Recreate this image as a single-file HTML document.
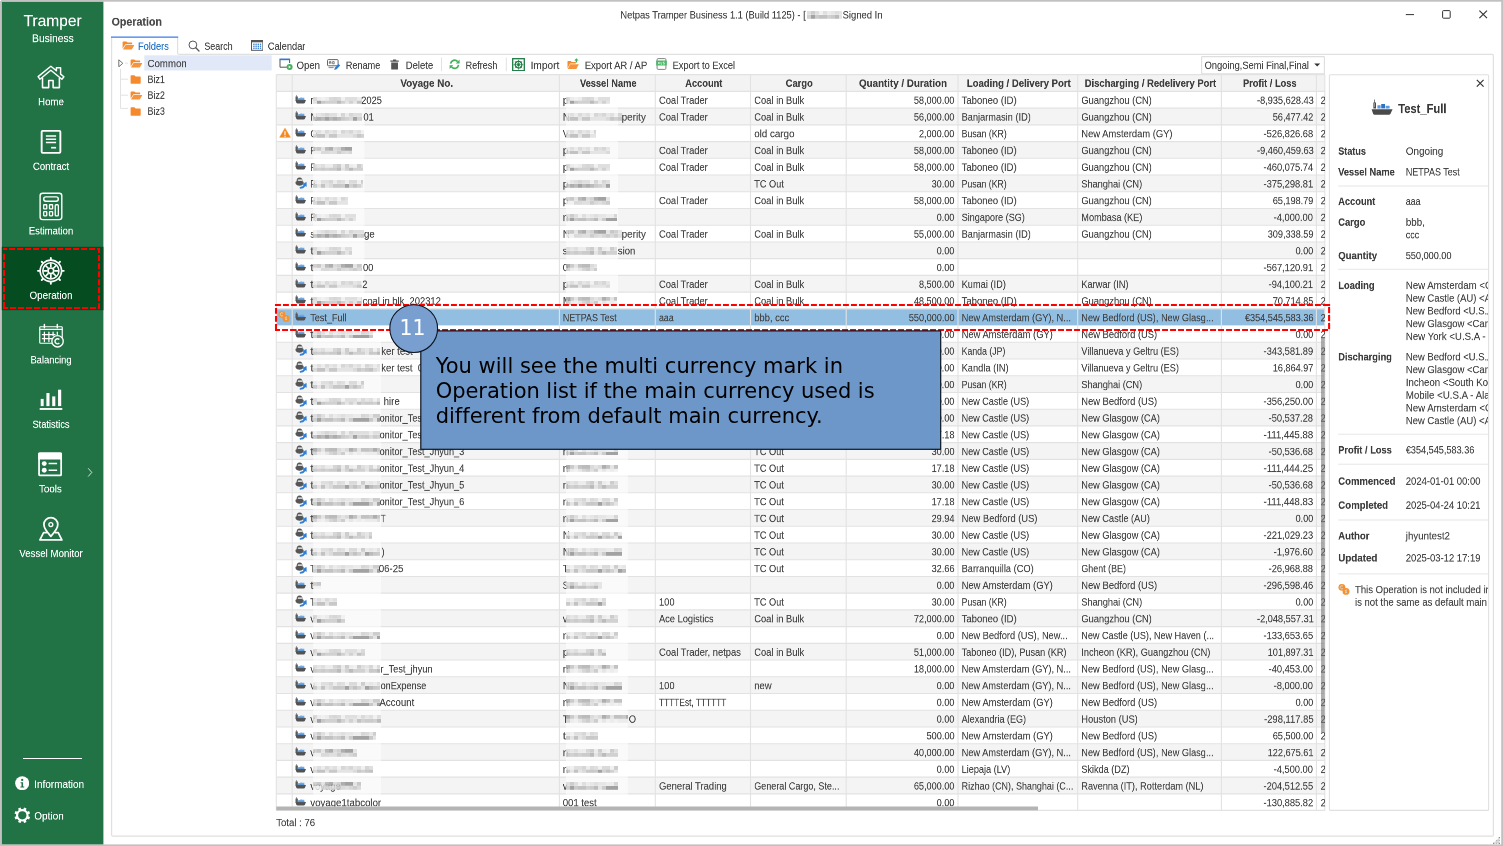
<!DOCTYPE html>
<html lang="en"><head><meta charset="utf-8"><title>Netpas Tramper Business 1.1 - Operation</title>
<style>
html,body{margin:0;padding:0;background:#fff}
body{width:1503px;height:846px;overflow:hidden;font-family:"Liberation Sans",sans-serif}
#app{will-change:transform;position:relative;width:1503px;height:846px;overflow:hidden;background:#fff;font-size:20px;color:#444}
.t{position:absolute;white-space:pre;line-height:24px;transform-origin:0 0;will-change:transform;-webkit-text-stroke:.25px}
.r{transform-origin:100% 0}
.c{transform-origin:50% 0}
.w{color:#fff}
.b{font-weight:bold;color:#3c3c3c}
.bl{color:#1f6fc4}
.dv{font-family:"DejaVu Sans","Liberation Sans",sans-serif}
#bg{position:absolute;left:0;top:0}
.p{position:absolute;white-space:pre}
.bx{position:absolute;height:7.6px;filter:blur(.45px);opacity:.9}
.m0{background:linear-gradient(90deg,#f0f0f0 0px 4px,#e4e4e4 4px 8px,#dcdcdc 8px 12px,#d2d2d2 12px 16px,#dcdcdc 16px 20px,#dcdcdc 20px 24px,#f0f0f0 24px 28px,#d2d2d2 28px 32px,#eaeaea 32px 36px,#d2d2d2 36px 40px,#dcdcdc 40px 44px,#dcdcdc 44px 48px,#dcdcdc 48px 52px,#dcdcdc 52px 56px,#eaeaea 56px 60px,#dcdcdc 60px 64px,#dcdcdc 64px 68px,#d2d2d2 68px 72px) 0 0/100% 3.8px no-repeat,linear-gradient(90deg,#c2c2c2 0px 4px,#a6a6a6 4px 8px,#b4b4b4 8px 12px,#989898 12px 16px,#b4b4b4 16px 20px,#a6a6a6 20px 24px,#b4b4b4 24px 28px,#c6c6c6 28px 32px,#cccccc 32px 36px,#d6d6d6 36px 40px,#989898 40px 44px,#cccccc 44px 48px,#c6c6c6 48px 52px,#c2c2c2 52px 56px,#d6d6d6 56px 60px,#c6c6c6 60px 64px,#cccccc 64px 68px,#c2c2c2 68px 72px) 0 3.8px/100% 3.8px no-repeat}
.m1{background:linear-gradient(90deg,#eaeaea 0px 4px,#f0f0f0 4px 8px,#dcdcdc 8px 12px,#dcdcdc 12px 16px,#d2d2d2 16px 20px,#eaeaea 20px 24px,#d6d6d6 24px 28px,#dcdcdc 28px 32px,#f0f0f0 32px 36px,#d6d6d6 36px 40px,#d6d6d6 40px 44px,#f0f0f0 44px 48px,#c8c8c8 48px 52px,#eaeaea 52px 56px,#e4e4e4 56px 60px,#eaeaea 60px 64px,#dcdcdc 64px 68px,#c8c8c8 68px 72px) 0 0/100% 3.8px no-repeat,linear-gradient(90deg,#c6c6c6 0px 4px,#e2e2e2 4px 8px,#bcbcbc 8px 12px,#e2e2e2 12px 16px,#d6d6d6 16px 20px,#c2c2c2 20px 24px,#c2c2c2 24px 28px,#c6c6c6 28px 32px,#989898 32px 36px,#cccccc 36px 40px,#bcbcbc 40px 44px,#cccccc 44px 48px,#e2e2e2 48px 52px,#989898 52px 56px,#b4b4b4 56px 60px,#c2c2c2 60px 64px,#c6c6c6 64px 68px,#bcbcbc 68px 72px) 0 3.8px/100% 3.8px no-repeat}
.m2{background:linear-gradient(90deg,#cccccc 0px 4px,#c2c2c2 4px 8px,#e2e2e2 8px 12px,#b4b4b4 12px 16px,#a6a6a6 16px 20px,#d6d6d6 20px 24px,#cccccc 24px 28px,#a6a6a6 28px 32px,#989898 32px 36px,#989898 36px 40px,#e2e2e2 40px 44px,#c2c2c2 44px 48px,#cccccc 48px 52px,#e2e2e2 52px 56px,#989898 56px 60px,#c6c6c6 60px 64px,#d6d6d6 64px 68px,#cccccc 68px 72px) 0 0/100% 3.8px no-repeat,linear-gradient(90deg,#f0f0f0 0px 4px,#f0f0f0 4px 8px,#d6d6d6 8px 12px,#d6d6d6 12px 16px,#dcdcdc 16px 20px,#dcdcdc 20px 24px,#c8c8c8 24px 28px,#d6d6d6 28px 32px,#dcdcdc 32px 36px,#d2d2d2 36px 40px,#c8c8c8 40px 44px,#d6d6d6 44px 48px,#c8c8c8 48px 52px,#dcdcdc 52px 56px,#f0f0f0 56px 60px,#d2d2d2 60px 64px,#d6d6d6 64px 68px,#f0f0f0 68px 72px) 0 3.8px/100% 3.8px no-repeat}
.m3{background:linear-gradient(90deg,#dcdcdc 0px 4px,#c8c8c8 4px 8px,#dcdcdc 8px 12px,#f0f0f0 12px 16px,#dcdcdc 16px 20px,#eaeaea 20px 24px,#e4e4e4 24px 28px,#dcdcdc 28px 32px,#e4e4e4 32px 36px,#e4e4e4 36px 40px,#eaeaea 40px 44px,#eaeaea 44px 48px,#d2d2d2 48px 52px,#d6d6d6 52px 56px,#e4e4e4 56px 60px,#c8c8c8 60px 64px,#c8c8c8 64px 68px,#d2d2d2 68px 72px) 0 0/100% 3.8px no-repeat,linear-gradient(90deg,#cccccc 0px 4px,#989898 4px 8px,#c6c6c6 8px 12px,#bcbcbc 12px 16px,#bcbcbc 16px 20px,#cccccc 20px 24px,#c6c6c6 24px 28px,#b4b4b4 28px 32px,#e2e2e2 32px 36px,#c6c6c6 36px 40px,#989898 40px 44px,#989898 44px 48px,#989898 48px 52px,#989898 52px 56px,#c2c2c2 56px 60px,#e2e2e2 60px 64px,#989898 64px 68px,#b4b4b4 68px 72px) 0 3.8px/100% 3.8px no-repeat}
.m4{background:linear-gradient(90deg,#eaeaea 0px 4px,#dcdcdc 4px 8px,#eaeaea 8px 12px,#d6d6d6 12px 16px,#e4e4e4 16px 20px,#dcdcdc 20px 24px,#f0f0f0 24px 28px,#d2d2d2 28px 32px,#dcdcdc 32px 36px,#d2d2d2 36px 40px,#e4e4e4 40px 44px,#dcdcdc 44px 48px,#f0f0f0 48px 52px,#d2d2d2 52px 56px,#dcdcdc 56px 60px,#eaeaea 60px 64px,#dcdcdc 64px 68px,#e4e4e4 68px 72px) 0 0/100% 3.8px no-repeat,linear-gradient(90deg,#d6d6d6 0px 4px,#bcbcbc 4px 8px,#bcbcbc 8px 12px,#e2e2e2 12px 16px,#c2c2c2 16px 20px,#c2c2c2 20px 24px,#e2e2e2 24px 28px,#e2e2e2 28px 32px,#e2e2e2 32px 36px,#e2e2e2 36px 40px,#d6d6d6 40px 44px,#c2c2c2 44px 48px,#cccccc 48px 52px,#c2c2c2 52px 56px,#bcbcbc 56px 60px,#d6d6d6 60px 64px,#e2e2e2 64px 68px,#cccccc 68px 72px) 0 3.8px/100% 3.8px no-repeat}
.m5{background:linear-gradient(90deg,#a6a6a6 0px 4px,#c6c6c6 4px 8px,#e2e2e2 8px 12px,#bcbcbc 12px 16px,#b4b4b4 16px 20px,#b4b4b4 20px 24px,#d6d6d6 24px 28px,#e2e2e2 28px 32px,#d6d6d6 32px 36px,#a6a6a6 36px 40px,#bcbcbc 40px 44px,#e2e2e2 44px 48px,#bcbcbc 48px 52px,#bcbcbc 52px 56px,#c2c2c2 56px 60px,#a6a6a6 60px 64px,#c2c2c2 64px 68px,#a6a6a6 68px 72px) 0 0/100% 3.8px no-repeat,linear-gradient(90deg,#d2d2d2 0px 4px,#eaeaea 4px 8px,#f0f0f0 8px 12px,#e4e4e4 12px 16px,#d2d2d2 16px 20px,#c8c8c8 20px 24px,#dcdcdc 24px 28px,#c8c8c8 28px 32px,#f0f0f0 32px 36px,#e4e4e4 36px 40px,#f0f0f0 40px 44px,#eaeaea 44px 48px,#f0f0f0 48px 52px,#eaeaea 52px 56px,#eaeaea 56px 60px,#eaeaea 60px 64px,#dcdcdc 64px 68px,#eaeaea 68px 72px) 0 3.8px/100% 3.8px no-repeat}
.m6{background:linear-gradient(90deg,#d6d6d6 0px 4px,#eaeaea 4px 8px,#f0f0f0 8px 12px,#eaeaea 12px 16px,#d6d6d6 16px 20px,#d2d2d2 20px 24px,#d6d6d6 24px 28px,#f0f0f0 28px 32px,#dcdcdc 32px 36px,#dcdcdc 36px 40px,#dcdcdc 40px 44px,#eaeaea 44px 48px,#d6d6d6 48px 52px,#e4e4e4 52px 56px,#dcdcdc 56px 60px,#f0f0f0 60px 64px,#dcdcdc 64px 68px,#dcdcdc 68px 72px) 0 0/100% 3.8px no-repeat,linear-gradient(90deg,#e2e2e2 0px 4px,#989898 4px 8px,#c2c2c2 8px 12px,#cccccc 12px 16px,#cccccc 16px 20px,#cccccc 20px 24px,#b4b4b4 24px 28px,#cccccc 28px 32px,#e2e2e2 32px 36px,#cccccc 36px 40px,#e2e2e2 40px 44px,#bcbcbc 44px 48px,#cccccc 48px 52px,#c6c6c6 52px 56px,#c6c6c6 56px 60px,#cccccc 60px 64px,#b4b4b4 64px 68px,#b4b4b4 68px 72px) 0 3.8px/100% 3.8px no-repeat}
.m7{background:linear-gradient(90deg,#dcdcdc 0px 4px,#e4e4e4 4px 8px,#dcdcdc 8px 12px,#eaeaea 12px 16px,#eaeaea 16px 20px,#d2d2d2 20px 24px,#c8c8c8 24px 28px,#eaeaea 28px 32px,#c8c8c8 32px 36px,#eaeaea 36px 40px,#f0f0f0 40px 44px,#c8c8c8 44px 48px,#dcdcdc 48px 52px,#e4e4e4 52px 56px,#d2d2d2 56px 60px,#f0f0f0 60px 64px,#d6d6d6 64px 68px,#dcdcdc 68px 72px) 0 0/100% 3.8px no-repeat,linear-gradient(90deg,#c6c6c6 0px 4px,#cccccc 4px 8px,#c6c6c6 8px 12px,#cccccc 12px 16px,#c6c6c6 16px 20px,#c6c6c6 20px 24px,#b4b4b4 24px 28px,#e2e2e2 28px 32px,#cccccc 32px 36px,#b4b4b4 36px 40px,#cccccc 40px 44px,#cccccc 44px 48px,#cccccc 48px 52px,#e2e2e2 52px 56px,#c2c2c2 56px 60px,#c6c6c6 60px 64px,#b4b4b4 64px 68px,#bcbcbc 68px 72px) 0 3.8px/100% 3.8px no-repeat}

</style></head>
<body>
<div id="app">
<svg id="bg" width="1503" height="846" viewBox="0 0 1503 846"><rect x="0.00" y="0.00" width="1503.00" height="846.00" fill="#c2c0c0"/><rect x="1.70" y="1.70" width="1499.50" height="842.70" fill="#fff"/><rect x="0.00" y="0.00" width="1.00" height="1.00" fill="#fff"/><rect x="1.80" y="1.80" width="101.60" height="842.60" fill="#217346"/><rect x="1.80" y="246.80" width="101.60" height="63.40" fill="#054d21"/><rect x="23.00" y="758.00" width="59.00" height="1.00" fill="#fff"/><rect x="111.60" y="54.30" width="1381.80" height="781.80" fill="none" stroke="#e0e0e0" stroke-width="1.2" rx="1.2"/><rect x="111.00" y="37.40" width="67.20" height="17.60" fill="#fff"/><path d="M111.6 55 V37.4 M177.6 37.4 V54.3" fill="none" stroke="#e0e0e0" stroke-width="1.2"/><path d="M111.0 37.1 H178.2" fill="none" stroke="#3a7bea" stroke-width="1.2"/><rect x="144.30" y="55.30" width="127.40" height="15.20" fill="#e1e9f8"/><rect x="441.00" y="57.60" width="1.00" height="13.60" fill="#e2e2e2"/><rect x="505.80" y="57.60" width="1.00" height="13.60" fill="#e2e2e2"/><rect x="1201.60" y="56.60" width="122.80" height="17.20" fill="#fff" stroke="#dedede" stroke-width="1.1" rx="0.8"/><rect x="276.30" y="74.60" width="1048.50" height="16.80" fill="#f3f3f3"/><rect x="276.30" y="108.12" width="1048.50" height="16.73" fill="#f4f4f4"/><rect x="276.30" y="141.58" width="1048.50" height="16.72" fill="#f4f4f4"/><rect x="276.30" y="175.03" width="1048.50" height="16.72" fill="#f4f4f4"/><rect x="276.30" y="208.48" width="1048.50" height="16.72" fill="#f4f4f4"/><rect x="276.30" y="241.93" width="1048.50" height="16.72" fill="#f4f4f4"/><rect x="276.30" y="275.38" width="1048.50" height="16.73" fill="#f4f4f4"/><rect x="276.30" y="308.83" width="1048.50" height="16.73" fill="#92bee1"/><rect x="276.30" y="342.28" width="1048.50" height="16.72" fill="#f4f4f4"/><rect x="276.30" y="375.73" width="1048.50" height="16.73" fill="#f4f4f4"/><rect x="276.30" y="409.18" width="1048.50" height="16.72" fill="#f4f4f4"/><rect x="276.30" y="442.62" width="1048.50" height="16.73" fill="#f4f4f4"/><rect x="276.30" y="476.08" width="1048.50" height="16.73" fill="#f4f4f4"/><rect x="276.30" y="509.53" width="1048.50" height="16.72" fill="#f4f4f4"/><rect x="276.30" y="542.98" width="1048.50" height="16.73" fill="#f4f4f4"/><rect x="276.30" y="576.43" width="1048.50" height="16.73" fill="#f4f4f4"/><rect x="276.30" y="609.88" width="1048.50" height="16.73" fill="#f4f4f4"/><rect x="276.30" y="643.33" width="1048.50" height="16.73" fill="#f4f4f4"/><rect x="276.30" y="676.77" width="1048.50" height="16.73" fill="#f4f4f4"/><rect x="276.30" y="710.23" width="1048.50" height="16.73" fill="#f4f4f4"/><rect x="276.30" y="743.68" width="1048.50" height="16.72" fill="#f4f4f4"/><rect x="276.30" y="777.12" width="1048.50" height="16.73" fill="#f4f4f4"/><path d="M276.3 74.6H1324.8M276.3 810.4H1324.8M1324.8 74.6V810.4M276.3 91.40H1324.8M276.3 108.12H1324.8M276.3 124.85H1324.8M276.3 141.58H1324.8M276.3 158.30H1324.8M276.3 175.03H1324.8M276.3 191.75H1324.8M276.3 208.48H1324.8M276.3 225.20H1324.8M276.3 241.93H1324.8M276.3 258.65H1324.8M276.3 275.38H1324.8M276.3 292.10H1324.8M276.3 308.83H1324.8M276.3 325.55H1324.8M276.3 342.28H1324.8M276.3 359.00H1324.8M276.3 375.73H1324.8M276.3 392.45H1324.8M276.3 409.18H1324.8M276.3 425.90H1324.8M276.3 442.62H1324.8M276.3 459.35H1324.8M276.3 476.08H1324.8M276.3 492.80H1324.8M276.3 509.53H1324.8M276.3 526.25H1324.8M276.3 542.98H1324.8M276.3 559.70H1324.8M276.3 576.43H1324.8M276.3 593.15H1324.8M276.3 609.88H1324.8M276.3 626.60H1324.8M276.3 643.33H1324.8M276.3 660.05H1324.8M276.3 676.77H1324.8M276.3 693.50H1324.8M276.3 710.23H1324.8M276.3 726.95H1324.8M276.3 743.68H1324.8M276.3 760.40H1324.8M276.3 777.12H1324.8M276.3 793.85H1324.8" fill="none" stroke="#e2e2e2" stroke-width="1.1"/><path d="M276.3 74.6V810.4M292.2 74.6V810.4M559.4 74.6V810.4M655.3 74.6V810.4M750.5 74.6V810.4M846.2 74.6V810.4M958.0 74.6V810.4M1077.7 74.6V810.4M1221.4 74.6V810.4M1316.4 74.6V810.4" fill="none" stroke="#e2e2e2" stroke-width="1.1"/><rect x="313.20" y="92.40" width="51.20" height="216.20" fill="#fff" fill-opacity=".55"/><rect x="313.20" y="326.40" width="67.80" height="468.60" fill="#fff" fill-opacity=".55"/><rect x="566.00" y="92.40" width="52.00" height="216.20" fill="#fff" fill-opacity=".55"/><rect x="566.00" y="443.40" width="61.80" height="351.60" fill="#fff" fill-opacity=".55"/><rect x="1329.40" y="74.80" width="159.20" height="735.60" fill="#fff" stroke="#e0e0e0" stroke-width="1.1" rx="1"/><rect x="1338.20" y="185.50" width="150.40" height="1.00" fill="#e6e6e6"/><rect x="1338.20" y="268.80" width="150.40" height="1.00" fill="#e6e6e6"/><rect x="1338.20" y="433.70" width="150.40" height="1.00" fill="#e6e6e6"/><rect x="1338.20" y="463.70" width="150.40" height="1.00" fill="#e6e6e6"/><rect x="1338.20" y="519.50" width="150.40" height="1.00" fill="#e6e6e6"/><rect x="1338.20" y="573.40" width="150.40" height="1.00" fill="#e6e6e6"/></svg>
<span class="t c w" style="top:10px;left:52px;transform:translate(calc(-50% + 0.60px),0.97px) scale(0.4853,0.5045);font-size:32px;line-height:38px;">Tramper</span>
<span class="t c w" style="top:31px;left:52px;transform:translate(calc(-50% + 0.90px),0.83px) scale(0.4675,0.5133);font-size:22px;line-height:26px;">Business</span>
<svg style="position:absolute;left:0.00px;top:0.00px;" width="104.00" height="846.00" viewBox="0 0 104 846"><g fill="none" stroke="#fff" stroke-linejoin="round" stroke-linecap="round"><path d="M38.1 76.6 L50.85 66.2 L56.4 70.7 V67.7 H60.6 V74.1 L63.9 76.7 L61.9 79.2 L50.85 70.3 L39.9 79.2 Z" stroke-width="1.45"/><path d="M42.5 78.3 V87.6 H48.7 V80.5 H53.1 V87.6 H59.4 V78.3" stroke-width="1.55"/><rect x="41.65" y="130.85" width="18.7" height="22" rx="1" stroke-width="1.9"/><path d="M45.9 135.9 H56.1 M45.9 139.25 H56.1 M45.9 142.5 H56.1" stroke-width="1.45" stroke-linecap="butt"/><path d="M51.1 147.7 H56.1" stroke-width="1.7" stroke-linecap="butt"/><rect x="40.1" y="193.2" width="21.7" height="26.4" rx="2.6" stroke-width="1.4"/><rect x="43.7" y="196.9" width="14.6" height="4.3" rx="2.15" stroke-width="1.4"/><g stroke-width="1.3"><rect x="43.65" y="204.75" width="3.1" height="4.2" rx=".5"/><rect x="49.5" y="204.75" width="3.1" height="4.2" rx=".5"/><rect x="43.65" y="211.7" width="3.1" height="4.1" rx=".5"/><rect x="49.5" y="211.7" width="3.1" height="4.1" rx=".5"/><rect x="55.25" y="204.75" width="3.1" height="11.05" rx=".9"/></g><circle cx="50.85" cy="270.85" r="10.75" stroke-width="1.55"/><circle cx="50.85" cy="270.85" r="8.1" stroke-width="1.5"/><circle cx="50.85" cy="270.85" r="2.85" stroke-width="1.7"/><path d="M54.35 270.85L58.45 270.85M53.32 273.32L56.22 276.22M50.85 274.35L50.85 278.45M48.38 273.32L45.48 276.22M47.35 270.85L43.25 270.85M48.38 268.38L45.48 265.48M50.85 267.35L50.85 263.25M53.32 268.38L56.22 265.48" stroke-width="1.65" stroke-linecap="butt"/><path d="M62.15 270.85L63.75 270.85M58.84 278.84L59.97 279.97M50.85 282.15L50.85 283.75M42.86 278.84L41.73 279.97M39.55 270.85L37.95 270.85M42.86 262.86L41.73 261.73M50.85 259.55L50.85 257.95M58.84 262.86L59.97 261.73" stroke-width="1.9"/><rect x="39.75" y="326.75" width="22.5" height="16.5" rx=".8" stroke-width="1.15"/><path d="M39.8 329.4 H62.2" stroke-width="1.15"/><path d="M44.4 324.4 V327.8 M57.3 324.4 V327.8" stroke-width="1.5"/><path d="M42.4 334.6 H55 M42.4 338.6 H51.5 M44.4 332.2 V341.6 M48.9 332.2 V341.6 M53.1 332.2 V335.5 M57.3 332.2 V334.4" stroke-width="1.25"/><circle cx="57.55" cy="341.3" r="5.7" fill="#217346" stroke-width="1.35"/><path d="M59.35 339.5 A2.55 2.55 0 1 0 59.35 343.1" stroke-width="1.45" stroke-linecap="butt"/><path d="M50.85 536.3 C46.4 531.6 43.9 528.3 43.9 524.6 A6.95 6.95 0 0 1 57.8 524.6 C57.8 528.3 55.3 531.6 50.85 536.3 Z" stroke-width="1.75"/><circle cx="50.85" cy="524.6" r="1.95" stroke-width="1.35"/><path d="M46.2 532.7 H43.6 L39.9 539.9 H61.9 L58.2 532.7 H55.5" stroke-width="1.7"/></g><g fill="#fff"><rect x="40.7" y="398.9" width="2.95" height="7.2"/><rect x="46.4" y="393" width="3.1" height="13.1"/><rect x="52.2" y="396.4" width="3.1" height="9.7"/><rect x="58.05" y="389.7" width="3.15" height="16.4"/><rect x="39.7" y="408.05" width="22.6" height="1.85"/></g><rect x="39.05" y="453.4" width="22.1" height="22" rx="1" fill="none" stroke="#fff" stroke-width="1.75"/><path d="M38.2 453.4 Q38.2 452.5 39.1 452.5 H61.1 Q62 452.5 62 453.4 V459.4 H38.2 Z" fill="#fff"/><circle cx="44.25" cy="463.6" r="2.45" fill="#fff"/><circle cx="44.25" cy="470.3" r="2.45" fill="#fff"/><path d="M48.6 463.6 H57.1 M48.6 470.3 H57.1" stroke="#fff" stroke-width="1.5" fill="none"/><path d="M88.2 468.3 L91.8 472.4 L88.2 476.5" fill="none" stroke="#e4eee8" stroke-width="1" stroke-opacity=".9"/></svg>
<span class="t c w" style="top:95px;left:51px;transform:translate(calc(-50% + 0.00px),0.39px) scale(0.4833,0.5214);">Home</span>
<span class="t c w" style="top:159px;left:51px;transform:translate(calc(-50% + 0.00px),0.99px) scale(0.4794,0.5214);">Contract</span>
<span class="t c w" style="top:224px;left:51px;transform:translate(calc(-50% + 0.00px),0.49px) scale(0.4754,0.5214);">Estimation</span>
<span class="t c w" style="top:288px;left:51px;transform:translate(calc(-50% + 0.00px),0.99px) scale(0.4878,0.5214);">Operation</span>
<span class="t c w" style="top:353px;left:51px;transform:translate(calc(-50% + 0.00px),0.49px) scale(0.4663,0.5214);">Balancing</span>
<span class="t c w" style="top:417px;left:51px;transform:translate(calc(-50% + 0.00px),0.99px) scale(0.4629,0.5214);">Statistics</span>
<span class="t c w" style="top:482px;left:50px;transform:translate(calc(-50% + 0.40px),0.49px) scale(0.4866,0.5214);">Tools</span>
<span class="t c w" style="top:547px;left:51px;transform:translate(calc(-50% + 0.00px),0.09px) scale(0.4838,0.5214);">Vessel Monitor</span>
<svg style="position:absolute;left:14.80px;top:776.00px;" width="14.40" height="14.40" viewBox="0 0 14.4 14.4"><circle cx="7.2" cy="7.2" r="7" fill="#fff"/><circle cx="7.2" cy="3.9" r="1.15" fill="#217346"/><path d="M5.6 6.3 H8.1 V10.6 H9.2 V11.5 H5.4 V10.6 H6.5 V7.2 H5.6 Z" fill="#217346"/></svg>
<span class="t w" style="top:777px;left:34px;transform:translate(0.20px,0.89px) scale(0.4982,0.5214);">Information</span>
<svg style="position:absolute;left:13.70px;top:806.70px;" width="16.60" height="16.60" viewBox="0 0 16.6 16.6"><path d="M14.32 9.31L16.09 10.10L15.08 12.54L13.27 11.84L11.84 13.27L12.54 15.08L10.10 16.09L9.31 14.32L7.29 14.32L6.50 16.09L4.06 15.08L4.76 13.27L3.33 11.84L1.52 12.54L0.51 10.10L2.28 9.31L2.28 7.29L0.51 6.50L1.52 4.06L3.33 4.76L4.76 3.33L4.06 1.52L6.50 0.51L7.29 2.28L9.31 2.28L10.10 0.51L12.54 1.52L11.84 3.33L13.27 4.76L15.08 4.06L16.09 6.50L14.32 7.29Z" fill="#fff"/><circle cx="8.3" cy="8.3" r="6.0" fill="#fff"/><circle cx="8.3" cy="8.3" r="4.1" fill="#217346"/></svg>
<span class="t w" style="top:809px;left:34px;transform:translate(0.20px,0.59px) scale(0.5019,0.5214);">Option</span>
<svg style="position:absolute;left:0.00px;top:0.00px;pointer-events:none" width="1503.00" height="846.00" viewBox="0 0 1503 846"><path d="M2.97 249.0H7.13M9.08 249.0H15.13M17.08 249.0H23.13M25.08 249.0H31.13M33.08 249.0H39.13M41.08 249.0H47.13M49.08 249.0H55.13M57.08 249.0H63.13M65.08 249.0H71.13M73.08 249.0H79.13M81.08 249.0H87.13M89.08 249.0H95.13M97.08 249.0H100.05M2.97 308.0H8.10M10.00 308.0H16.10M18.00 308.0H24.10M26.00 308.0H32.10M34.00 308.0H40.10M42.00 308.0H48.10M50.00 308.0H56.10M58.00 308.0H64.10M66.00 308.0H72.10M74.00 308.0H80.10M82.00 308.0H88.10M90.00 308.0H96.10M98.00 308.0H100.05M99.0 248.00V253.06M99.0 255.10V261.10M99.0 263.14V269.14M99.0 271.18V277.18M99.0 279.22V285.22M99.0 287.26V293.26M99.0 295.30V301.30M99.0 303.34V309.00M4.0 253.85V259.85M4.0 261.89V267.89M4.0 269.93V275.93M4.0 277.97V283.97M4.0 286.01V292.01M4.0 294.05V300.05M4.0 302.09V308.09" fill="none" stroke="#ff0000" stroke-width="2.05"/></svg>
<span class="t" style="top:8px;left:620px;transform:translate(0.40px,0.59px) scale(0.4647,0.5214);">Netpas Tramper Business 1.1 (Build 1125) - [</span>
<div class="bx m3" style="left:806.6px;top:11.2px;width:35px"></div>
<span class="t" style="top:8px;left:842px;transform:translate(0.60px,0.59px) scale(0.4719,0.5214);">Signed In</span>
<svg style="position:absolute;left:1404.00px;top:8.00px;" width="96.00" height="14.00" viewBox="0 0 96 14"><g fill="none" stroke="#333" stroke-width="1"><path d="M1.8 6.6 H10"/><rect x="38.6" y="2.6" width="7.6" height="7.6" rx=".8"/><path d="M75.4 2.6 L83 10.2 M83 2.6 L75.4 10.2" stroke-width="1.15"/></g></svg>
<span class="t b" style="top:15px;left:111px;transform:translate(0.60px,0.07px) scale(0.4844,0.5267);font-size:22px;line-height:26px;color:#484848">Operation</span>
<svg style="position:absolute;left:121.60px;top:40.30px;" width="12.80" height="10.40" viewBox="0 0 12.8 10.4"><path d="M.6 2.2 Q.6 1.4 1.4 1.4 H4.4 L5.6 2.6 H9.6 Q10.2 2.6 10.2 3.3 V4.3 H3.3 L.6 8.6 Z" fill="#f58a2c"/><path d="M3.6 5 H12.4 L9.8 9.6 H.9 Z" fill="#f7933a"/></svg>
<span class="t bl" style="top:39px;left:138px;transform:translate(0.00px,0.89px) scale(0.4615,0.5214);">Folders</span>
<svg style="position:absolute;left:187.60px;top:40.20px;" width="12.00" height="12.00" viewBox="0 0 12 12"><circle cx="4.9" cy="4.9" r="3.9" fill="none" stroke="#555" stroke-width="1"/><path d="M7.8 7.8 L11 11" stroke="#555" stroke-width="1.3" stroke-linecap="round"/></svg>
<span class="t" style="top:39px;left:204px;transform:translate(0.30px,0.89px) scale(0.446,0.5214);">Search</span>
<svg style="position:absolute;left:250.80px;top:40.40px;" width="12.40" height="10.80" viewBox="0 0 12.4 10.8"><rect x=".5" y=".5" width="11.4" height="9.8" fill="#fff" stroke="#555" stroke-width="1"/><rect x=".5" y=".5" width="11.4" height="1.8" fill="#555"/><g fill="#2e7bd6"><rect x="2.2" y="3.6" width="1.4" height="1.3"/><rect x="4.4" y="3.6" width="1.4" height="1.3"/><rect x="6.6" y="3.6" width="1.4" height="1.3"/><rect x="8.8" y="3.6" width="1.4" height="1.3"/><rect x="2.2" y="5.6" width="1.4" height="1.3"/><rect x="4.4" y="5.6" width="1.4" height="1.3"/><rect x="6.6" y="5.6" width="1.4" height="1.3"/><rect x="8.8" y="5.6" width="1.4" height="1.3"/><rect x="2.2" y="7.6" width="1.4" height="1.3"/><rect x="4.4" y="7.6" width="1.4" height="1.3"/><rect x="6.6" y="7.6" width="1.4" height="1.3"/><rect x="8.8" y="7.6" width="1.4" height="1.3"/></g></svg>
<span class="t" style="top:39px;left:267px;transform:translate(0.80px,0.89px) scale(0.4628,0.5214);">Calendar</span>
<svg style="position:absolute;left:118.40px;top:58.60px;" width="6.00" height="8.60" viewBox="0 0 6 8.6"><path d="M.8 .8 L4.8 4.3 L.8 7.8 Z" fill="#fff" stroke="#6a6a6a" stroke-width=".95"/></svg>
<svg style="position:absolute;left:119.00px;top:62.00px;" width="12.00" height="50.00" viewBox="0 0 12 50"><path d="M6 1.2 H9 M1.5 7 V46.4 H9 M1.5 17.2 H9 M1.5 33.2 H9" fill="none" stroke="#e2e2e2" stroke-width="1"/></svg>
<svg style="position:absolute;left:130.20px;top:58.00px;" width="12.80" height="10.40" viewBox="0 0 12.8 10.4"><path d="M.6 2.2 Q.6 1.4 1.4 1.4 H4.4 L5.6 2.6 H9.6 Q10.2 2.6 10.2 3.3 V4.3 H3.3 L.6 8.6 Z" fill="#f58a2c"/><path d="M3.6 5 H12.4 L9.8 9.6 H.9 Z" fill="#f7933a"/></svg>
<span class="t" style="top:57px;left:147px;transform:translate(0.50px,0.19px) scale(0.4837,0.5214);">Common</span>
<svg style="position:absolute;left:130.20px;top:73.80px;" width="12.80" height="10.40" viewBox="0 0 12.8 10.4"><path d="M.6 1.9 Q.6 1.2 1.3 1.2 H4.4 L5.6 2.5 H10 Q10.7 2.5 10.7 3.2 V9 Q10.7 9.7 10 9.7 H1.3 Q.6 9.7 .6 9 Z" fill="#f58a2c"/></svg>
<span class="t" style="top:72px;left:147px;transform:translate(0.50px,0.99px) scale(0.4468,0.5214);">Biz1</span>
<svg style="position:absolute;left:130.20px;top:89.60px;" width="12.80" height="10.40" viewBox="0 0 12.8 10.4"><path d="M.6 2.2 Q.6 1.4 1.4 1.4 H4.4 L5.6 2.6 H9.6 Q10.2 2.6 10.2 3.3 V4.3 H3.3 L.6 8.6 Z" fill="#f58a2c"/><path d="M3.6 5 H12.4 L9.8 9.6 H.9 Z" fill="#f7933a"/></svg>
<span class="t" style="top:88px;left:147px;transform:translate(0.50px,0.79px) scale(0.4468,0.5214);">Biz2</span>
<svg style="position:absolute;left:130.20px;top:105.60px;" width="12.80" height="10.40" viewBox="0 0 12.8 10.4"><path d="M.6 1.9 Q.6 1.2 1.3 1.2 H4.4 L5.6 2.5 H10 Q10.7 2.5 10.7 3.2 V9 Q10.7 9.7 10 9.7 H1.3 Q.6 9.7 .6 9 Z" fill="#f58a2c"/></svg>
<span class="t" style="top:104px;left:147px;transform:translate(0.50px,0.79px) scale(0.4468,0.5214);">Biz3</span>
<svg style="position:absolute;left:278.60px;top:58.40px;" width="14.00" height="12.00" viewBox="0 0 14 12"><path d="M9.6 9.2 H1 V1.4 H10.6 V5" fill="none" stroke="#555" stroke-width="1"/><path d="M.5 1.4 H11.1" stroke="#2e7bd6" stroke-width="1.6"/><circle cx="10.6" cy="9" r="3" fill="#43b05c"/><path d="M9.7 7.6 L12 9 L9.7 10.4 Z" fill="#fff"/></svg>
<span class="t" style="top:58px;left:296px;transform:translate(0.60px,0.99px) scale(0.4779,0.5214);">Open</span>
<svg style="position:absolute;left:327.20px;top:58.60px;" width="13.60" height="11.60" viewBox="0 0 13.6 11.6"><rect x=".5" y=".6" width="10.6" height="6.2" rx=".8" fill="#fff" stroke="#555" stroke-width=".9"/><path d="M2.4 4.8 V2.6 H4 V4.8 M2.4 3.8 H4 M5.6 2.6 V4.8 H7.2 V2.6 Z M1.6 8.6 H6.6" fill="none" stroke="#555" stroke-width=".7"/><path d="M7.2 10.9 L8 8.6 L11.6 5 L13.2 6.6 L9.6 10.2 Z" fill="#2e7bd6"/></svg>
<span class="t" style="top:58px;left:345px;transform:translate(0.80px,0.99px) scale(0.4557,0.5214);">Rename</span>
<svg style="position:absolute;left:389.60px;top:59.00px;" width="9.20" height="11.00" viewBox="0 0 9.2 11"><path d="M.4 1.6 H8.8 V2.8 H.4 Z M3 .4 H6.2 V1.6 H3 Z M1.2 3.6 H8 V10 Q8 10.6 7.4 10.6 H1.8 Q1.2 10.6 1.2 10 Z" fill="#555"/></svg>
<span class="t" style="top:58px;left:405px;transform:translate(0.70px,0.99px) scale(0.4747,0.5214);">Delete</span>
<svg style="position:absolute;left:448.80px;top:59.40px;" width="11.20" height="10.60" viewBox="0 0 11.2 10.6"><g fill="none" stroke="#43b05c" stroke-width="1.7"><path d="M1.6 4.6 A4 4 0 0 1 8.6 2.6"/><path d="M9.6 6 A4 4 0 0 1 2.6 8"/></g><path d="M10.6 .6 V4.4 H6.8 Z M.6 10 V6.2 H4.4 Z" fill="#43b05c"/></svg>
<span class="t" style="top:58px;left:465px;transform:translate(0.60px,0.99px) scale(0.4528,0.5214);">Refresh</span>
<svg style="position:absolute;left:512.40px;top:58.00px;" width="13.00" height="13.40" viewBox="0 0 13 13.4"><rect x=".7" y=".7" width="11.6" height="12" fill="#fff" stroke="#1e7a43" stroke-width="1.3"/><circle cx="6.5" cy="6.7" r="3.3" fill="none" stroke="#1e7a43" stroke-width="1.2"/><circle cx="6.5" cy="6.7" r="1.2" fill="#1e7a43"/><path d="M6.5 1.8 V11.6 M1.6 6.7 H11.4 M3 3.2 L10 10.2 M10 3.2 L3 10.2" stroke="#1e7a43" stroke-width=".7"/></svg>
<span class="t" style="top:58px;left:530px;transform:translate(0.60px,0.99px) scale(0.507,0.5214);">Import</span>
<svg style="position:absolute;left:567.40px;top:58.20px;" width="12.40" height="12.00" viewBox="0 0 12.4 12"><path d="M.5 3.6 Q.5 3 1.1 3 H3.8 L4.8 4 H8.8 V5.6 H3 L.5 10.4 Z" fill="#f58a2c"/><path d="M3.2 6.2 H11.8 L9.4 11 H.7 Z" fill="#f7933a"/><path d="M9.4 .3 L11.6 2.6 H10.1 V4.6 H8.7 V2.6 H7.2 Z" fill="#43b05c"/></svg>
<span class="t" style="top:58px;left:584px;transform:translate(0.80px,0.99px) scale(0.4715,0.5214);">Export AR / AP</span>
<svg style="position:absolute;left:656.20px;top:58.40px;" width="11.00" height="12.00" viewBox="0 0 11 12"><rect x="1.1" y=".6" width="8.8" height="10.8" rx="1" fill="#fff" stroke="#777" stroke-width=".9"/><rect x=".2" y="2.6" width="10.6" height="5" rx=".6" fill="#4cb866"/><path d="M2.2 4 L3.6 6.2 M3.6 4 L2.2 6.2 M5 4 V6.2 H6 M7.2 6.2 H8.4 V5.1 H7.2 V4 H8.4" stroke="#fff" stroke-width=".6" fill="none"/></svg>
<span class="t" style="top:58px;left:672px;transform:translate(0.60px,0.99px) scale(0.4642,0.5214);">Export to Excel</span>
<span class="t" style="top:58px;left:1204px;transform:translate(0.60px,0.99px) scale(0.4648,0.5214);">Ongoing,Semi Final,Final</span>
<svg style="position:absolute;left:1314.20px;top:63.00px;" width="6.40" height="4.00" viewBox="0 0 6.4 4"><path d="M.2 .4 H6.2 L3.2 3.6 Z" fill="#333"/></svg>
<div style="position:absolute;left:0;top:0;width:1503px;height:846px;clip-path:inset(0 178.2px 35.6px 0)"><span class="t c b" style="top:76px;left:426px;transform:translate(calc(-50% + 0.70px),0.84px) scale(0.4897,0.5214);">Voyage No.</span>
<span class="t c b" style="top:76px;left:608px;transform:translate(calc(-50% + 0.25px),0.84px) scale(0.4619,0.5214);">Vessel Name</span>
<span class="t c b" style="top:76px;left:703px;transform:translate(calc(-50% + 0.80px),0.84px) scale(0.4643,0.5214);">Account</span>
<span class="t c b" style="top:76px;left:799px;transform:translate(calc(-50% + 0.25px),0.84px) scale(0.4698,0.5214);">Cargo</span>
<span class="t c b" style="top:76px;left:903px;transform:translate(calc(-50% + 0.00px),0.84px) scale(0.4889,0.5214);">Quantity / Duration</span>
<span class="t c b" style="top:76px;left:1018px;transform:translate(calc(-50% + 0.75px),0.84px) scale(0.4767,0.5214);">Loading / Delivery Port</span>
<span class="t c b" style="top:76px;left:1150px;transform:translate(calc(-50% + 0.45px),0.84px) scale(0.4712,0.5214);">Discharging / Redelivery Port</span>
<span class="t c b" style="top:76px;left:1269px;transform:translate(calc(-50% + 0.80px),0.84px) scale(0.4636,0.5214);">Profit / Loss</span>
<svg style="position:absolute;left:294.80px;top:93.56px;" width="12.00" height="12.40" viewBox="0 0 12 12.4"><path d="M.45 5.95 H11 L9.9 8.75 Q9.6 9.55 8.7 9.55 H2.6 Q1.7 9.55 1.3 8.8 Z" fill="#525252"/><path d="M.5 2.4 H2.85 V6.4 H.5 Z M1.45 1.1 H2 V2.6 H1.45 Z" fill="#5a5a5a"/><path d="M3.2 4 L5 4 L6 3.2 L7 3.8 L9.3 3.8 V6 H3.2 Z" fill="#72a8e2"/><path d="M3.2 5.1 H9.3 V6.1 H3.2 Z" fill="#5a96d8"/></svg>
<span class="t" style="top:93px;left:310px;transform:translate(0.30px,0.94px) scale(0.5013,0.5214);">r</span>
<div class="bx m6" style="left:313.0px;top:96.65px;width:49.0px"></div>
<span class="t" style="top:93px;left:361px;transform:translate(0.20px,0.94px) scale(0.4661,0.5214);">2025</span>
<span class="t" style="top:93px;left:562px;transform:translate(0.80px,0.94px) scale(0.5084,0.5214);">p</span>
<div class="bx m6" style="left:566.0px;top:96.65px;width:44.0px"></div>
<span class="t" style="top:93px;left:659px;transform:translate(0.00px,0.94px) scale(0.4668,0.5214);">Coal Trader</span>
<span class="t" style="top:93px;left:754px;transform:translate(0.20px,0.94px) scale(0.4679,0.5214);">Coal in Bulk</span>
<span class="t r" style="top:93px;right:549px;transform:translate(0.40px,0.94px) scale(0.4548,0.5214);">58,000.00</span>
<span class="t" style="top:93px;left:961px;transform:translate(0.60px,0.94px) scale(0.4764,0.5214);">Taboneo (ID)</span>
<span class="t" style="top:93px;left:1081px;transform:translate(0.30px,0.94px) scale(0.4665,0.5214);">Guangzhou (CN)</span>
<span class="t r" style="top:93px;right:190px;transform:translate(0.30px,0.94px) scale(0.46,0.5214);">-8,935,628.43</span>
<span class="t" style="top:93px;left:1320px;transform:translate(0.60px,0.94px) scale(0.4661,0.5214);">2</span>
<svg style="position:absolute;left:294.80px;top:110.29px;" width="12.00" height="12.40" viewBox="0 0 12 12.4"><path d="M.45 5.95 H11 L9.9 8.75 Q9.6 9.55 8.7 9.55 H2.6 Q1.7 9.55 1.3 8.8 Z" fill="#525252"/><path d="M.5 2.4 H2.85 V6.4 H.5 Z M1.45 1.1 H2 V2.6 H1.45 Z" fill="#5a5a5a"/><path d="M3.2 4 L5 4 L6 3.2 L7 3.8 L9.3 3.8 V6 H3.2 Z" fill="#72a8e2"/><path d="M3.2 5.1 H9.3 V6.1 H3.2 Z" fill="#5a96d8"/></svg>
<span class="t" style="top:110px;left:310px;transform:translate(0.30px,0.67px) scale(0.4982,0.5214);">N</span>
<div class="bx m0" style="left:313.0px;top:113.37px;width:49.0px"></div>
<span class="t" style="top:110px;left:363px;transform:translate(0.40px,0.67px) scale(0.4661,0.5214);">01</span>
<span class="t" style="top:110px;left:562px;transform:translate(0.80px,0.67px) scale(0.4982,0.5214);">N</span>
<div class="bx m4" style="left:566.0px;top:113.37px;width:56.0px"></div>
<span class="t" style="top:110px;left:621px;transform:translate(0.60px,0.67px) scale(0.4962,0.5214);">perity</span>
<span class="t" style="top:110px;left:659px;transform:translate(0.00px,0.67px) scale(0.4668,0.5214);">Coal Trader</span>
<span class="t" style="top:110px;left:754px;transform:translate(0.20px,0.67px) scale(0.4679,0.5214);">Coal in Bulk</span>
<span class="t r" style="top:110px;right:549px;transform:translate(0.40px,0.67px) scale(0.4548,0.5214);">56,000.00</span>
<span class="t" style="top:110px;left:961px;transform:translate(0.60px,0.67px) scale(0.4612,0.5214);">Banjarmasin (ID)</span>
<span class="t" style="top:110px;left:1081px;transform:translate(0.30px,0.67px) scale(0.4665,0.5214);">Guangzhou (CN)</span>
<span class="t r" style="top:110px;right:190px;transform:translate(0.30px,0.67px) scale(0.4548,0.5214);">56,477.42</span>
<span class="t" style="top:110px;left:1320px;transform:translate(0.60px,0.67px) scale(0.4661,0.5214);">2</span>
<svg style="position:absolute;left:278.60px;top:126.76px;" width="12.00" height="12.00" viewBox="0 0 12 12"><path d="M6 1.15 L11.4 10.35 H.7 Z" fill="#f5891f" stroke="#f5891f" stroke-width=".5" stroke-linejoin="round"/><path d="M6 4.2 V8.2" stroke="#fff" stroke-width="1.15"/><circle cx="6" cy="9.35" r=".62" fill="#fff"/></svg>
<svg style="position:absolute;left:294.80px;top:127.01px;" width="12.00" height="12.40" viewBox="0 0 12 12.4"><path d="M.45 5.95 H11 L9.9 8.75 Q9.6 9.55 8.7 9.55 H2.6 Q1.7 9.55 1.3 8.8 Z" fill="#525252"/><path d="M.5 2.4 H2.85 V6.4 H.5 Z M1.45 1.1 H2 V2.6 H1.45 Z" fill="#5a5a5a"/><path d="M3.2 4 L5 4 L6 3.2 L7 3.8 L9.3 3.8 V6 H3.2 Z" fill="#72a8e2"/><path d="M3.2 5.1 H9.3 V6.1 H3.2 Z" fill="#5a96d8"/></svg>
<span class="t" style="top:127px;left:310px;transform:translate(0.30px,0.39px) scale(0.466,0.5214);">O</span>
<div class="bx m4" style="left:313.0px;top:130.10px;width:51.0px"></div>
<span class="t" style="top:127px;left:562px;transform:translate(0.80px,0.39px) scale(0.4478,0.5214);">V</span>
<div class="bx m4" style="left:566.0px;top:130.10px;width:30.0px"></div>
<span class="t" style="top:127px;left:754px;transform:translate(0.20px,0.39px) scale(0.4892,0.5214);">old cargo</span>
<span class="t r" style="top:127px;right:549px;transform:translate(0.40px,0.39px) scale(0.4532,0.5214);">2,000.00</span>
<span class="t" style="top:127px;left:961px;transform:translate(0.60px,0.39px) scale(0.4369,0.5214);">Busan (KR)</span>
<span class="t" style="top:127px;left:1081px;transform:translate(0.30px,0.39px) scale(0.4691,0.5214);">New Amsterdam (GY)</span>
<span class="t r" style="top:127px;right:190px;transform:translate(0.30px,0.39px) scale(0.4637,0.5214);">-526,826.68</span>
<span class="t" style="top:127px;left:1320px;transform:translate(0.60px,0.39px) scale(0.4661,0.5214);">2</span>
<svg style="position:absolute;left:294.80px;top:143.74px;" width="12.00" height="12.40" viewBox="0 0 12 12.4"><path d="M.45 5.95 H11 L9.9 8.75 Q9.6 9.55 8.7 9.55 H2.6 Q1.7 9.55 1.3 8.8 Z" fill="#525252"/><path d="M.5 2.4 H2.85 V6.4 H.5 Z M1.45 1.1 H2 V2.6 H1.45 Z" fill="#5a5a5a"/><path d="M3.2 4 L5 4 L6 3.2 L7 3.8 L9.3 3.8 V6 H3.2 Z" fill="#72a8e2"/><path d="M3.2 5.1 H9.3 V6.1 H3.2 Z" fill="#5a96d8"/></svg>
<span class="t" style="top:144px;left:310px;transform:translate(0.30px,0.12px) scale(0.4038,0.5214);">P</span>
<div class="bx m2" style="left:313.0px;top:146.83px;width:39.0px"></div>
<span class="t" style="top:144px;left:562px;transform:translate(0.80px,0.12px) scale(0.5084,0.5214);">p</span>
<div class="bx m4" style="left:566.0px;top:146.83px;width:44.0px"></div>
<span class="t" style="top:144px;left:659px;transform:translate(0.00px,0.12px) scale(0.4668,0.5214);">Coal Trader</span>
<span class="t" style="top:144px;left:754px;transform:translate(0.20px,0.12px) scale(0.4679,0.5214);">Coal in Bulk</span>
<span class="t r" style="top:144px;right:549px;transform:translate(0.40px,0.12px) scale(0.4548,0.5214);">58,000.00</span>
<span class="t" style="top:144px;left:961px;transform:translate(0.60px,0.12px) scale(0.4764,0.5214);">Taboneo (ID)</span>
<span class="t" style="top:144px;left:1081px;transform:translate(0.30px,0.12px) scale(0.4665,0.5214);">Guangzhou (CN)</span>
<span class="t r" style="top:144px;right:190px;transform:translate(0.30px,0.12px) scale(0.46,0.5214);">-9,460,459.63</span>
<span class="t" style="top:144px;left:1320px;transform:translate(0.60px,0.12px) scale(0.4661,0.5214);">2</span>
<svg style="position:absolute;left:294.80px;top:160.46px;" width="12.00" height="12.40" viewBox="0 0 12 12.4"><path d="M.45 5.95 H11 L9.9 8.75 Q9.6 9.55 8.7 9.55 H2.6 Q1.7 9.55 1.3 8.8 Z" fill="#525252"/><path d="M.5 2.4 H2.85 V6.4 H.5 Z M1.45 1.1 H2 V2.6 H1.45 Z" fill="#5a5a5a"/><path d="M3.2 4 L5 4 L6 3.2 L7 3.8 L9.3 3.8 V6 H3.2 Z" fill="#72a8e2"/><path d="M3.2 5.1 H9.3 V6.1 H3.2 Z" fill="#5a96d8"/></svg>
<span class="t" style="top:160px;left:310px;transform:translate(0.30px,0.84px) scale(0.4038,0.5214);">P</span>
<div class="bx m7" style="left:313.0px;top:163.55px;width:50.0px"></div>
<span class="t" style="top:160px;left:562px;transform:translate(0.80px,0.84px) scale(0.5084,0.5214);">p</span>
<div class="bx m6" style="left:566.0px;top:163.55px;width:44.0px"></div>
<span class="t" style="top:160px;left:659px;transform:translate(0.00px,0.84px) scale(0.4668,0.5214);">Coal Trader</span>
<span class="t" style="top:160px;left:754px;transform:translate(0.20px,0.84px) scale(0.4679,0.5214);">Coal in Bulk</span>
<span class="t r" style="top:160px;right:549px;transform:translate(0.40px,0.84px) scale(0.4548,0.5214);">58,000.00</span>
<span class="t" style="top:160px;left:961px;transform:translate(0.60px,0.84px) scale(0.4764,0.5214);">Taboneo (ID)</span>
<span class="t" style="top:160px;left:1081px;transform:translate(0.30px,0.84px) scale(0.4665,0.5214);">Guangzhou (CN)</span>
<span class="t r" style="top:160px;right:190px;transform:translate(0.30px,0.84px) scale(0.4637,0.5214);">-460,075.74</span>
<span class="t" style="top:160px;left:1320px;transform:translate(0.60px,0.84px) scale(0.4661,0.5214);">2</span>
<svg style="position:absolute;left:294.80px;top:177.19px;" width="12.00" height="12.40" viewBox="0 0 12 12.4"><path d="M1.6 4.3 Q1.5 .45 4.55 .45 Q7.6 .45 7.5 4.3 L8.7 5 Q8.9 7.4 6.9 8.35 Q4.55 9.3 2.2 8.35 Q.2 7.4 .4 5 Z" fill="#555"/><rect x="2.8" y="2.55" width="4.3" height="1.25" rx=".3" fill="#fff"/><path d="M4.9 10.3 Q7.8 10 8.8 8.1 L7.5 7.1 L11.4 5.3 L11.5 9.6 L10.3 8.9 Q8.7 11.8 5 11.6 Z" fill="#2f7fd8" stroke="#2f7fd8" stroke-width=".35" stroke-linejoin="round"/></svg>
<span class="t" style="top:177px;left:310px;transform:translate(0.30px,0.57px) scale(0.4038,0.5214);">P</span>
<div class="bx m1" style="left:313.0px;top:180.28px;width:50.0px"></div>
<span class="t" style="top:177px;left:562px;transform:translate(0.80px,0.57px) scale(0.5084,0.5214);">p</span>
<div class="bx m0" style="left:566.0px;top:180.28px;width:44.0px"></div>
<span class="t" style="top:177px;left:754px;transform:translate(0.20px,0.57px) scale(0.4591,0.5214);">TC Out</span>
<span class="t r" style="top:177px;right:549px;transform:translate(0.40px,0.57px) scale(0.456,0.5214);">30.00</span>
<span class="t" style="top:177px;left:961px;transform:translate(0.60px,0.57px) scale(0.4356,0.5214);">Pusan (KR)</span>
<span class="t" style="top:177px;left:1081px;transform:translate(0.30px,0.57px) scale(0.4597,0.5214);">Shanghai (CN)</span>
<span class="t r" style="top:177px;right:190px;transform:translate(0.30px,0.57px) scale(0.4637,0.5214);">-375,298.81</span>
<span class="t" style="top:177px;left:1320px;transform:translate(0.60px,0.57px) scale(0.4661,0.5214);">2</span>
<svg style="position:absolute;left:294.80px;top:193.91px;" width="12.00" height="12.40" viewBox="0 0 12 12.4"><path d="M.45 5.95 H11 L9.9 8.75 Q9.6 9.55 8.7 9.55 H2.6 Q1.7 9.55 1.3 8.8 Z" fill="#525252"/><path d="M.5 2.4 H2.85 V6.4 H.5 Z M1.45 1.1 H2 V2.6 H1.45 Z" fill="#5a5a5a"/><path d="M3.2 4 L5 4 L6 3.2 L7 3.8 L9.3 3.8 V6 H3.2 Z" fill="#72a8e2"/><path d="M3.2 5.1 H9.3 V6.1 H3.2 Z" fill="#5a96d8"/></svg>
<span class="t" style="top:194px;left:310px;transform:translate(0.30px,0.29px) scale(0.4038,0.5214);">P</span>
<div class="bx m4" style="left:313.0px;top:197.00px;width:35.0px"></div>
<span class="t" style="top:194px;left:562px;transform:translate(0.80px,0.29px) scale(0.5084,0.5214);">p</span>
<div class="bx m2" style="left:566.0px;top:197.00px;width:44.0px"></div>
<span class="t" style="top:194px;left:659px;transform:translate(0.00px,0.29px) scale(0.4668,0.5214);">Coal Trader</span>
<span class="t" style="top:194px;left:754px;transform:translate(0.20px,0.29px) scale(0.4679,0.5214);">Coal in Bulk</span>
<span class="t r" style="top:194px;right:549px;transform:translate(0.40px,0.29px) scale(0.4548,0.5214);">58,000.00</span>
<span class="t" style="top:194px;left:961px;transform:translate(0.60px,0.29px) scale(0.4764,0.5214);">Taboneo (ID)</span>
<span class="t" style="top:194px;left:1081px;transform:translate(0.30px,0.29px) scale(0.4665,0.5214);">Guangzhou (CN)</span>
<span class="t r" style="top:194px;right:190px;transform:translate(0.30px,0.29px) scale(0.4548,0.5214);">65,198.79</span>
<span class="t" style="top:194px;left:1320px;transform:translate(0.60px,0.29px) scale(0.4661,0.5214);">2</span>
<svg style="position:absolute;left:294.80px;top:210.64px;" width="12.00" height="12.40" viewBox="0 0 12 12.4"><path d="M.45 5.95 H11 L9.9 8.75 Q9.6 9.55 8.7 9.55 H2.6 Q1.7 9.55 1.3 8.8 Z" fill="#525252"/><path d="M.5 2.4 H2.85 V6.4 H.5 Z M1.45 1.1 H2 V2.6 H1.45 Z" fill="#5a5a5a"/><path d="M3.2 4 L5 4 L6 3.2 L7 3.8 L9.3 3.8 V6 H3.2 Z" fill="#72a8e2"/><path d="M3.2 5.1 H9.3 V6.1 H3.2 Z" fill="#5a96d8"/></svg>
<span class="t" style="top:211px;left:310px;transform:translate(0.30px,0.02px) scale(0.3984,0.5214);">R</span>
<div class="bx m6" style="left:313.0px;top:213.73px;width:43.0px"></div>
<span class="t" style="top:211px;left:562px;transform:translate(0.80px,0.02px) scale(0.4894,0.5214);">n</span>
<div class="bx m3" style="left:566.0px;top:213.73px;width:51.0px"></div>
<span class="t r" style="top:211px;right:549px;transform:translate(0.40px,0.02px) scale(0.4531,0.5214);">0.00</span>
<span class="t" style="top:211px;left:961px;transform:translate(0.60px,0.02px) scale(0.4552,0.5214);">Singapore (SG)</span>
<span class="t" style="top:211px;left:1081px;transform:translate(0.30px,0.02px) scale(0.4572,0.5214);">Mombasa (KE)</span>
<span class="t r" style="top:211px;right:190px;transform:translate(0.30px,0.02px) scale(0.463,0.5214);">-4,000.00</span>
<span class="t" style="top:211px;left:1320px;transform:translate(0.60px,0.02px) scale(0.4661,0.5214);">2</span>
<svg style="position:absolute;left:294.80px;top:227.36px;" width="12.00" height="12.40" viewBox="0 0 12 12.4"><path d="M.45 5.95 H11 L9.9 8.75 Q9.6 9.55 8.7 9.55 H2.6 Q1.7 9.55 1.3 8.8 Z" fill="#525252"/><path d="M.5 2.4 H2.85 V6.4 H.5 Z M1.45 1.1 H2 V2.6 H1.45 Z" fill="#5a5a5a"/><path d="M3.2 4 L5 4 L6 3.2 L7 3.8 L9.3 3.8 V6 H3.2 Z" fill="#72a8e2"/><path d="M3.2 5.1 H9.3 V6.1 H3.2 Z" fill="#5a96d8"/></svg>
<span class="t" style="top:227px;left:310px;transform:translate(0.30px,0.74px) scale(0.4082,0.5214);">s</span>
<div class="bx m0" style="left:313.0px;top:230.45px;width:51.0px"></div>
<span class="t" style="top:227px;left:364px;transform:translate(0.00px,0.74px) scale(0.4809,0.5214);">ge</span>
<span class="t" style="top:227px;left:562px;transform:translate(0.80px,0.74px) scale(0.4982,0.5214);">N</span>
<div class="bx m2" style="left:566.0px;top:230.45px;width:56.0px"></div>
<span class="t" style="top:227px;left:621px;transform:translate(0.60px,0.74px) scale(0.4962,0.5214);">perity</span>
<span class="t" style="top:227px;left:659px;transform:translate(0.00px,0.74px) scale(0.4668,0.5214);">Coal Trader</span>
<span class="t" style="top:227px;left:754px;transform:translate(0.20px,0.74px) scale(0.4679,0.5214);">Coal in Bulk</span>
<span class="t r" style="top:227px;right:549px;transform:translate(0.40px,0.74px) scale(0.4548,0.5214);">55,000.00</span>
<span class="t" style="top:227px;left:961px;transform:translate(0.60px,0.74px) scale(0.4612,0.5214);">Banjarmasin (ID)</span>
<span class="t" style="top:227px;left:1081px;transform:translate(0.30px,0.74px) scale(0.4665,0.5214);">Guangzhou (CN)</span>
<span class="t r" style="top:227px;right:190px;transform:translate(0.30px,0.74px) scale(0.4561,0.5214);">309,338.59</span>
<span class="t" style="top:227px;left:1320px;transform:translate(0.60px,0.74px) scale(0.4661,0.5214);">2</span>
<svg style="position:absolute;left:294.80px;top:244.09px;" width="12.00" height="12.40" viewBox="0 0 12 12.4"><path d="M.45 5.95 H11 L9.9 8.75 Q9.6 9.55 8.7 9.55 H2.6 Q1.7 9.55 1.3 8.8 Z" fill="#525252"/><path d="M.5 2.4 H2.85 V6.4 H.5 Z M1.45 1.1 H2 V2.6 H1.45 Z" fill="#5a5a5a"/><path d="M3.2 4 L5 4 L6 3.2 L7 3.8 L9.3 3.8 V6 H3.2 Z" fill="#72a8e2"/><path d="M3.2 5.1 H9.3 V6.1 H3.2 Z" fill="#5a96d8"/></svg>
<span class="t" style="top:244px;left:310px;transform:translate(0.30px,0.47px) scale(0.586,0.5214);">t</span>
<div class="bx m6" style="left:313.0px;top:247.18px;width:39.0px"></div>
<span class="t" style="top:244px;left:562px;transform:translate(0.80px,0.47px) scale(0.4082,0.5214);">s</span>
<div class="bx m7" style="left:566.0px;top:247.18px;width:51.0px"></div>
<span class="t" style="top:244px;left:617px;transform:translate(0.80px,0.47px) scale(0.4766,0.5214);">sion</span>
<span class="t r" style="top:244px;right:549px;transform:translate(0.40px,0.47px) scale(0.4531,0.5214);">0.00</span>
<span class="t r" style="top:244px;right:190px;transform:translate(0.30px,0.47px) scale(0.4531,0.5214);">0.00</span>
<span class="t" style="top:244px;left:1320px;transform:translate(0.60px,0.47px) scale(0.4661,0.5214);">2</span>
<svg style="position:absolute;left:294.80px;top:260.81px;" width="12.00" height="12.40" viewBox="0 0 12 12.4"><path d="M.45 5.95 H11 L9.9 8.75 Q9.6 9.55 8.7 9.55 H2.6 Q1.7 9.55 1.3 8.8 Z" fill="#525252"/><path d="M.5 2.4 H2.85 V6.4 H.5 Z M1.45 1.1 H2 V2.6 H1.45 Z" fill="#5a5a5a"/><path d="M3.2 4 L5 4 L6 3.2 L7 3.8 L9.3 3.8 V6 H3.2 Z" fill="#72a8e2"/><path d="M3.2 5.1 H9.3 V6.1 H3.2 Z" fill="#5a96d8"/></svg>
<span class="t" style="top:261px;left:310px;transform:translate(0.30px,0.19px) scale(0.586,0.5214);">t</span>
<div class="bx m2" style="left:313.0px;top:263.90px;width:49.0px"></div>
<span class="t" style="top:261px;left:363px;transform:translate(0.00px,0.19px) scale(0.4661,0.5214);">00</span>
<span class="t" style="top:261px;left:562px;transform:translate(0.80px,0.19px) scale(0.4661,0.5214);">0</span>
<div class="bx m5" style="left:566.0px;top:263.90px;width:31.0px"></div>
<span class="t r" style="top:261px;right:549px;transform:translate(0.40px,0.19px) scale(0.4531,0.5214);">0.00</span>
<span class="t r" style="top:261px;right:190px;transform:translate(0.30px,0.19px) scale(0.4637,0.5214);">-567,120.91</span>
<span class="t" style="top:261px;left:1320px;transform:translate(0.60px,0.19px) scale(0.4661,0.5214);">2</span>
<svg style="position:absolute;left:294.80px;top:277.54px;" width="12.00" height="12.40" viewBox="0 0 12 12.4"><path d="M.45 5.95 H11 L9.9 8.75 Q9.6 9.55 8.7 9.55 H2.6 Q1.7 9.55 1.3 8.8 Z" fill="#525252"/><path d="M.5 2.4 H2.85 V6.4 H.5 Z M1.45 1.1 H2 V2.6 H1.45 Z" fill="#5a5a5a"/><path d="M3.2 4 L5 4 L6 3.2 L7 3.8 L9.3 3.8 V6 H3.2 Z" fill="#72a8e2"/><path d="M3.2 5.1 H9.3 V6.1 H3.2 Z" fill="#5a96d8"/></svg>
<span class="t" style="top:277px;left:310px;transform:translate(0.30px,0.92px) scale(0.586,0.5214);">t</span>
<div class="bx m4" style="left:313.0px;top:280.63px;width:49.0px"></div>
<span class="t" style="top:277px;left:362px;transform:translate(0.20px,0.92px) scale(0.4661,0.5214);">2</span>
<span class="t" style="top:277px;left:562px;transform:translate(0.80px,0.92px) scale(0.5084,0.5214);">p</span>
<div class="bx m4" style="left:566.0px;top:280.63px;width:44.0px"></div>
<span class="t" style="top:277px;left:659px;transform:translate(0.00px,0.92px) scale(0.4668,0.5214);">Coal Trader</span>
<span class="t" style="top:277px;left:754px;transform:translate(0.20px,0.92px) scale(0.4679,0.5214);">Coal in Bulk</span>
<span class="t r" style="top:277px;right:549px;transform:translate(0.40px,0.92px) scale(0.4532,0.5214);">8,500.00</span>
<span class="t" style="top:277px;left:961px;transform:translate(0.60px,0.92px) scale(0.4633,0.5214);">Kumai (ID)</span>
<span class="t" style="top:277px;left:1081px;transform:translate(0.30px,0.92px) scale(0.4618,0.5214);">Karwar (IN)</span>
<span class="t r" style="top:277px;right:190px;transform:translate(0.30px,0.92px) scale(0.4634,0.5214);">-94,100.21</span>
<span class="t" style="top:277px;left:1320px;transform:translate(0.60px,0.92px) scale(0.4661,0.5214);">2</span>
<svg style="position:absolute;left:294.80px;top:294.26px;" width="12.00" height="12.40" viewBox="0 0 12 12.4"><path d="M.45 5.95 H11 L9.9 8.75 Q9.6 9.55 8.7 9.55 H2.6 Q1.7 9.55 1.3 8.8 Z" fill="#525252"/><path d="M.5 2.4 H2.85 V6.4 H.5 Z M1.45 1.1 H2 V2.6 H1.45 Z" fill="#5a5a5a"/><path d="M3.2 4 L5 4 L6 3.2 L7 3.8 L9.3 3.8 V6 H3.2 Z" fill="#72a8e2"/><path d="M3.2 5.1 H9.3 V6.1 H3.2 Z" fill="#5a96d8"/></svg>
<span class="t" style="top:294px;left:310px;transform:translate(0.30px,0.64px) scale(0.586,0.5214);">t</span>
<div class="bx m6" style="left:313.0px;top:297.35px;width:49.0px"></div>
<span class="t" style="top:294px;left:362px;transform:translate(0.60px,0.64px) scale(0.469,0.5214);">coal in blk_202312</span>
<span class="t" style="top:294px;left:562px;transform:translate(0.80px,0.64px) scale(0.5181,0.5214);">M</span>
<div class="bx m5" style="left:566.0px;top:297.35px;width:51.0px"></div>
<span class="t" style="top:294px;left:659px;transform:translate(0.00px,0.64px) scale(0.4668,0.5214);">Coal Trader</span>
<span class="t" style="top:294px;left:754px;transform:translate(0.20px,0.64px) scale(0.4679,0.5214);">Coal in Bulk</span>
<span class="t r" style="top:294px;right:549px;transform:translate(0.40px,0.64px) scale(0.4548,0.5214);">48,500.00</span>
<span class="t" style="top:294px;left:961px;transform:translate(0.60px,0.64px) scale(0.4764,0.5214);">Taboneo (ID)</span>
<span class="t" style="top:294px;left:1081px;transform:translate(0.30px,0.64px) scale(0.4665,0.5214);">Guangzhou (CN)</span>
<span class="t r" style="top:294px;right:190px;transform:translate(0.30px,0.64px) scale(0.4548,0.5214);">70,714.85</span>
<span class="t" style="top:294px;left:1320px;transform:translate(0.60px,0.64px) scale(0.4661,0.5214);">2</span>
<svg style="position:absolute;left:278.30px;top:310.49px;" width="12.00" height="12.40" viewBox="0 0 12 12.4"><circle cx="3.9" cy="4.35" r="3.45" fill="#f5922f"/><circle cx="8" cy="8.4" r="3.45" fill="#f5922f"/><path d="M4.9 3.1 A1.6 1.6 0 1 0 4.9 5.6" fill="none" stroke="#d5e3f0" stroke-width=".8"/><path d="M9 7.4 Q8 6.6 7.3 7.5 Q7 8.3 8 8.5 Q9 8.8 8.7 9.5 Q8 10.2 7 9.4" fill="none" stroke="#d5e3f0" stroke-width=".8"/></svg>
<svg style="position:absolute;left:294.80px;top:310.99px;" width="12.00" height="12.40" viewBox="0 0 12 12.4"><path d="M.45 5.95 H11 L9.9 8.75 Q9.6 9.55 8.7 9.55 H2.6 Q1.7 9.55 1.3 8.8 Z" fill="#525252"/><path d="M.5 2.4 H2.85 V6.4 H.5 Z M1.45 1.1 H2 V2.6 H1.45 Z" fill="#5a5a5a"/><path d="M3.2 4 L5 4 L6 3.2 L7 3.8 L9.3 3.8 V6 H3.2 Z" fill="#72a8e2"/><path d="M3.2 5.1 H9.3 V6.1 H3.2 Z" fill="#5a96d8"/></svg>
<span class="t" style="top:311px;left:310px;transform:translate(0.30px,0.37px) scale(0.4524,0.5214);">Test_Full</span>
<span class="t" style="top:311px;left:562px;transform:translate(0.80px,0.37px) scale(0.4473,0.5214);">NETPAS Test</span>
<span class="t" style="top:311px;left:659px;transform:translate(0.00px,0.37px) scale(0.44,0.5214);">aaa</span>
<span class="t" style="top:311px;left:754px;transform:translate(0.20px,0.37px) scale(0.4701,0.5214);">bbb, ccc</span>
<span class="t r" style="top:311px;right:549px;transform:translate(0.40px,0.37px) scale(0.4561,0.5214);">550,000.00</span>
<span class="t" style="top:311px;left:961px;transform:translate(0.60px,0.37px) scale(0.4622,0.5214);">New Amsterdam (GY), N...</span>
<span class="t" style="top:311px;left:1081px;transform:translate(0.30px,0.37px) scale(0.4593,0.5214);">New Bedford (US), New Glasg...</span>
<span class="t r" style="top:311px;right:190px;transform:translate(0.30px,0.37px) scale(0.4561,0.5214);">€354,545,583.36</span>
<span class="t" style="top:311px;left:1320px;transform:translate(0.60px,0.37px) scale(0.4661,0.5214);">2</span>
<svg style="position:absolute;left:294.80px;top:327.71px;" width="12.00" height="12.40" viewBox="0 0 12 12.4"><path d="M.45 5.95 H11 L9.9 8.75 Q9.6 9.55 8.7 9.55 H2.6 Q1.7 9.55 1.3 8.8 Z" fill="#525252"/><path d="M.5 2.4 H2.85 V6.4 H.5 Z M1.45 1.1 H2 V2.6 H1.45 Z" fill="#5a5a5a"/><path d="M3.2 4 L5 4 L6 3.2 L7 3.8 L9.3 3.8 V6 H3.2 Z" fill="#72a8e2"/><path d="M3.2 5.1 H9.3 V6.1 H3.2 Z" fill="#5a96d8"/></svg>
<span class="t" style="top:328px;left:310px;transform:translate(0.30px,0.09px) scale(0.586,0.5214);">t</span>
<div class="bx m3" style="left:313.0px;top:330.80px;width:60.0px"></div>
<span class="t r" style="top:328px;right:549px;transform:translate(0.40px,0.09px) scale(0.4531,0.5214);">0.00</span>
<span class="t" style="top:328px;left:961px;transform:translate(0.60px,0.09px) scale(0.4691,0.5214);">New Amsterdam (GY)</span>
<span class="t" style="top:328px;left:1081px;transform:translate(0.30px,0.09px) scale(0.4673,0.5214);">New Bedford (US)</span>
<span class="t r" style="top:328px;right:190px;transform:translate(0.30px,0.09px) scale(0.4531,0.5214);">0.00</span>
<span class="t" style="top:328px;left:1320px;transform:translate(0.60px,0.09px) scale(0.4661,0.5214);">2</span>
<svg style="position:absolute;left:294.80px;top:344.44px;" width="12.00" height="12.40" viewBox="0 0 12 12.4"><path d="M1.6 4.3 Q1.5 .45 4.55 .45 Q7.6 .45 7.5 4.3 L8.7 5 Q8.9 7.4 6.9 8.35 Q4.55 9.3 2.2 8.35 Q.2 7.4 .4 5 Z" fill="#555"/><rect x="2.8" y="2.55" width="4.3" height="1.25" rx=".3" fill="#fff"/><path d="M4.9 10.3 Q7.8 10 8.8 8.1 L7.5 7.1 L11.4 5.3 L11.5 9.6 L10.3 8.9 Q8.7 11.8 5 11.6 Z" fill="#2f7fd8" stroke="#2f7fd8" stroke-width=".35" stroke-linejoin="round"/></svg>
<span class="t" style="top:344px;left:310px;transform:translate(0.30px,0.82px) scale(0.586,0.5214);">t</span>
<div class="bx m7" style="left:313.0px;top:347.53px;width:67.0px"></div>
<span class="t" style="top:344px;left:381px;transform:translate(0.20px,0.82px) scale(0.4793,0.5214);">ker test</span>
<span class="t r" style="top:344px;right:549px;transform:translate(0.40px,0.82px) scale(0.4531,0.5214);">0.00</span>
<span class="t" style="top:344px;left:961px;transform:translate(0.60px,0.82px) scale(0.4371,0.5214);">Kanda (JP)</span>
<span class="t" style="top:344px;left:1081px;transform:translate(0.30px,0.82px) scale(0.4582,0.5214);">Villanueva y Geltru (ES)</span>
<span class="t r" style="top:344px;right:190px;transform:translate(0.30px,0.82px) scale(0.4637,0.5214);">-343,581.89</span>
<span class="t" style="top:344px;left:1320px;transform:translate(0.60px,0.82px) scale(0.4661,0.5214);">2</span>
<svg style="position:absolute;left:294.80px;top:361.16px;" width="12.00" height="12.40" viewBox="0 0 12 12.4"><path d="M1.6 4.3 Q1.5 .45 4.55 .45 Q7.6 .45 7.5 4.3 L8.7 5 Q8.9 7.4 6.9 8.35 Q4.55 9.3 2.2 8.35 Q.2 7.4 .4 5 Z" fill="#555"/><rect x="2.8" y="2.55" width="4.3" height="1.25" rx=".3" fill="#fff"/><path d="M4.9 10.3 Q7.8 10 8.8 8.1 L7.5 7.1 L11.4 5.3 L11.5 9.6 L10.3 8.9 Q8.7 11.8 5 11.6 Z" fill="#2f7fd8" stroke="#2f7fd8" stroke-width=".35" stroke-linejoin="round"/></svg>
<span class="t" style="top:361px;left:310px;transform:translate(0.30px,0.54px) scale(0.586,0.5214);">t</span>
<div class="bx m4" style="left:313.0px;top:364.25px;width:67.0px"></div>
<span class="t" style="top:361px;left:381px;transform:translate(0.20px,0.54px) scale(0.477,0.5214);">ker test  0</span>
<span class="t r" style="top:361px;right:549px;transform:translate(0.40px,0.54px) scale(0.4531,0.5214);">0.00</span>
<span class="t" style="top:361px;left:961px;transform:translate(0.60px,0.54px) scale(0.4647,0.5214);">Kandla (IN)</span>
<span class="t" style="top:361px;left:1081px;transform:translate(0.30px,0.54px) scale(0.4582,0.5214);">Villanueva y Geltru (ES)</span>
<span class="t r" style="top:361px;right:190px;transform:translate(0.30px,0.54px) scale(0.4548,0.5214);">16,864.97</span>
<span class="t" style="top:361px;left:1320px;transform:translate(0.60px,0.54px) scale(0.4661,0.5214);">2</span>
<svg style="position:absolute;left:294.80px;top:377.89px;" width="12.00" height="12.40" viewBox="0 0 12 12.4"><path d="M1.6 4.3 Q1.5 .45 4.55 .45 Q7.6 .45 7.5 4.3 L8.7 5 Q8.9 7.4 6.9 8.35 Q4.55 9.3 2.2 8.35 Q.2 7.4 .4 5 Z" fill="#555"/><rect x="2.8" y="2.55" width="4.3" height="1.25" rx=".3" fill="#fff"/><path d="M4.9 10.3 Q7.8 10 8.8 8.1 L7.5 7.1 L11.4 5.3 L11.5 9.6 L10.3 8.9 Q8.7 11.8 5 11.6 Z" fill="#2f7fd8" stroke="#2f7fd8" stroke-width=".35" stroke-linejoin="round"/></svg>
<span class="t" style="top:378px;left:310px;transform:translate(0.30px,0.27px) scale(0.586,0.5214);">t</span>
<div class="bx m1" style="left:313.0px;top:380.98px;width:51.0px"></div>
<span class="t r" style="top:378px;right:549px;transform:translate(0.40px,0.27px) scale(0.4531,0.5214);">0.00</span>
<span class="t" style="top:378px;left:961px;transform:translate(0.60px,0.27px) scale(0.4356,0.5214);">Pusan (KR)</span>
<span class="t" style="top:378px;left:1081px;transform:translate(0.30px,0.27px) scale(0.4597,0.5214);">Shanghai (CN)</span>
<span class="t r" style="top:378px;right:190px;transform:translate(0.30px,0.27px) scale(0.4531,0.5214);">0.00</span>
<span class="t" style="top:378px;left:1320px;transform:translate(0.60px,0.27px) scale(0.4661,0.5214);">2</span>
<svg style="position:absolute;left:294.80px;top:394.61px;" width="12.00" height="12.40" viewBox="0 0 12 12.4"><path d="M1.6 4.3 Q1.5 .45 4.55 .45 Q7.6 .45 7.5 4.3 L8.7 5 Q8.9 7.4 6.9 8.35 Q4.55 9.3 2.2 8.35 Q.2 7.4 .4 5 Z" fill="#555"/><rect x="2.8" y="2.55" width="4.3" height="1.25" rx=".3" fill="#fff"/><path d="M4.9 10.3 Q7.8 10 8.8 8.1 L7.5 7.1 L11.4 5.3 L11.5 9.6 L10.3 8.9 Q8.7 11.8 5 11.6 Z" fill="#2f7fd8" stroke="#2f7fd8" stroke-width=".35" stroke-linejoin="round"/></svg>
<span class="t" style="top:394px;left:310px;transform:translate(0.30px,0.99px) scale(0.586,0.5214);">t</span>
<div class="bx m6" style="left:313.0px;top:397.70px;width:67.0px"></div>
<span class="t" style="top:394px;left:383px;transform:translate(0.60px,0.99px) scale(0.4842,0.5214);">hire</span>
<span class="t r" style="top:394px;right:549px;transform:translate(0.40px,0.99px) scale(0.4531,0.5214);">0.00</span>
<span class="t" style="top:394px;left:961px;transform:translate(0.60px,0.99px) scale(0.4534,0.5214);">New Castle (US)</span>
<span class="t" style="top:394px;left:1081px;transform:translate(0.30px,0.99px) scale(0.4673,0.5214);">New Bedford (US)</span>
<span class="t r" style="top:394px;right:190px;transform:translate(0.30px,0.99px) scale(0.4637,0.5214);">-356,250.00</span>
<span class="t" style="top:394px;left:1320px;transform:translate(0.60px,0.99px) scale(0.4661,0.5214);">2</span>
<svg style="position:absolute;left:294.80px;top:411.34px;" width="12.00" height="12.40" viewBox="0 0 12 12.4"><path d="M1.6 4.3 Q1.5 .45 4.55 .45 Q7.6 .45 7.5 4.3 L8.7 5 Q8.9 7.4 6.9 8.35 Q4.55 9.3 2.2 8.35 Q.2 7.4 .4 5 Z" fill="#555"/><rect x="2.8" y="2.55" width="4.3" height="1.25" rx=".3" fill="#fff"/><path d="M4.9 10.3 Q7.8 10 8.8 8.1 L7.5 7.1 L11.4 5.3 L11.5 9.6 L10.3 8.9 Q8.7 11.8 5 11.6 Z" fill="#2f7fd8" stroke="#2f7fd8" stroke-width=".35" stroke-linejoin="round"/></svg>
<span class="t" style="top:411px;left:310px;transform:translate(0.30px,0.72px) scale(0.586,0.5214);">t</span>
<div class="bx m3" style="left:313.0px;top:414.43px;width:67.0px"></div>
<span class="t" style="top:411px;left:379px;transform:translate(0.60px,0.72px) scale(0.4586,0.5214);">onitor_Test_Jhyun_1</span>
<span class="t r" style="top:411px;right:549px;transform:translate(0.40px,0.72px) scale(0.4531,0.5214);">0.00</span>
<span class="t" style="top:411px;left:961px;transform:translate(0.60px,0.72px) scale(0.4534,0.5214);">New Castle (US)</span>
<span class="t" style="top:411px;left:1081px;transform:translate(0.30px,0.72px) scale(0.4621,0.5214);">New Glasgow (CA)</span>
<span class="t r" style="top:411px;right:190px;transform:translate(0.30px,0.72px) scale(0.4634,0.5214);">-50,537.28</span>
<span class="t" style="top:411px;left:1320px;transform:translate(0.60px,0.72px) scale(0.4661,0.5214);">2</span>
<svg style="position:absolute;left:294.80px;top:428.06px;" width="12.00" height="12.40" viewBox="0 0 12 12.4"><path d="M1.6 4.3 Q1.5 .45 4.55 .45 Q7.6 .45 7.5 4.3 L8.7 5 Q8.9 7.4 6.9 8.35 Q4.55 9.3 2.2 8.35 Q.2 7.4 .4 5 Z" fill="#555"/><rect x="2.8" y="2.55" width="4.3" height="1.25" rx=".3" fill="#fff"/><path d="M4.9 10.3 Q7.8 10 8.8 8.1 L7.5 7.1 L11.4 5.3 L11.5 9.6 L10.3 8.9 Q8.7 11.8 5 11.6 Z" fill="#2f7fd8" stroke="#2f7fd8" stroke-width=".35" stroke-linejoin="round"/></svg>
<span class="t" style="top:428px;left:310px;transform:translate(0.30px,0.44px) scale(0.586,0.5214);">t</span>
<div class="bx m0" style="left:313.0px;top:431.15px;width:67.0px"></div>
<span class="t" style="top:428px;left:379px;transform:translate(0.60px,0.44px) scale(0.4586,0.5214);">onitor_Test_Jhyun_2</span>
<span class="t r" style="top:428px;right:549px;transform:translate(0.40px,0.44px) scale(0.456,0.5214);">17.18</span>
<span class="t" style="top:428px;left:961px;transform:translate(0.60px,0.44px) scale(0.4534,0.5214);">New Castle (US)</span>
<span class="t" style="top:428px;left:1081px;transform:translate(0.30px,0.44px) scale(0.4621,0.5214);">New Glasgow (CA)</span>
<span class="t r" style="top:428px;right:190px;transform:translate(0.30px,0.44px) scale(0.4769,0.5214);">-111,445.88</span>
<span class="t" style="top:428px;left:1320px;transform:translate(0.60px,0.44px) scale(0.4661,0.5214);">2</span>
<svg style="position:absolute;left:294.80px;top:444.79px;" width="12.00" height="12.40" viewBox="0 0 12 12.4"><path d="M1.6 4.3 Q1.5 .45 4.55 .45 Q7.6 .45 7.5 4.3 L8.7 5 Q8.9 7.4 6.9 8.35 Q4.55 9.3 2.2 8.35 Q.2 7.4 .4 5 Z" fill="#555"/><rect x="2.8" y="2.55" width="4.3" height="1.25" rx=".3" fill="#fff"/><path d="M4.9 10.3 Q7.8 10 8.8 8.1 L7.5 7.1 L11.4 5.3 L11.5 9.6 L10.3 8.9 Q8.7 11.8 5 11.6 Z" fill="#2f7fd8" stroke="#2f7fd8" stroke-width=".35" stroke-linejoin="round"/></svg>
<span class="t" style="top:445px;left:310px;transform:translate(0.30px,0.17px) scale(0.586,0.5214);">t</span>
<div class="bx m5" style="left:313.0px;top:447.88px;width:67.0px"></div>
<span class="t" style="top:445px;left:379px;transform:translate(0.60px,0.17px) scale(0.4586,0.5214);">onitor_Test_Jhyun_3</span>
<span class="t" style="top:445px;left:562px;transform:translate(0.80px,0.17px) scale(0.4894,0.5214);">n</span>
<div class="bx m3" style="left:566.0px;top:447.88px;width:52.0px"></div>
<span class="t" style="top:445px;left:754px;transform:translate(0.20px,0.17px) scale(0.4591,0.5214);">TC Out</span>
<span class="t r" style="top:445px;right:549px;transform:translate(0.40px,0.17px) scale(0.456,0.5214);">30.00</span>
<span class="t" style="top:445px;left:961px;transform:translate(0.60px,0.17px) scale(0.4534,0.5214);">New Castle (US)</span>
<span class="t" style="top:445px;left:1081px;transform:translate(0.30px,0.17px) scale(0.4621,0.5214);">New Glasgow (CA)</span>
<span class="t r" style="top:445px;right:190px;transform:translate(0.30px,0.17px) scale(0.4634,0.5214);">-50,536.68</span>
<span class="t" style="top:445px;left:1320px;transform:translate(0.60px,0.17px) scale(0.4661,0.5214);">2</span>
<svg style="position:absolute;left:294.80px;top:461.51px;" width="12.00" height="12.40" viewBox="0 0 12 12.4"><path d="M1.6 4.3 Q1.5 .45 4.55 .45 Q7.6 .45 7.5 4.3 L8.7 5 Q8.9 7.4 6.9 8.35 Q4.55 9.3 2.2 8.35 Q.2 7.4 .4 5 Z" fill="#555"/><rect x="2.8" y="2.55" width="4.3" height="1.25" rx=".3" fill="#fff"/><path d="M4.9 10.3 Q7.8 10 8.8 8.1 L7.5 7.1 L11.4 5.3 L11.5 9.6 L10.3 8.9 Q8.7 11.8 5 11.6 Z" fill="#2f7fd8" stroke="#2f7fd8" stroke-width=".35" stroke-linejoin="round"/></svg>
<span class="t" style="top:461px;left:310px;transform:translate(0.30px,0.89px) scale(0.586,0.5214);">t</span>
<div class="bx m7" style="left:313.0px;top:464.60px;width:67.0px"></div>
<span class="t" style="top:461px;left:379px;transform:translate(0.60px,0.89px) scale(0.4586,0.5214);">onitor_Test_Jhyun_4</span>
<span class="t" style="top:461px;left:562px;transform:translate(0.80px,0.89px) scale(0.4894,0.5214);">n</span>
<div class="bx m5" style="left:566.0px;top:464.60px;width:52.0px"></div>
<span class="t" style="top:461px;left:754px;transform:translate(0.20px,0.89px) scale(0.4591,0.5214);">TC Out</span>
<span class="t r" style="top:461px;right:549px;transform:translate(0.40px,0.89px) scale(0.456,0.5214);">17.18</span>
<span class="t" style="top:461px;left:961px;transform:translate(0.60px,0.89px) scale(0.4534,0.5214);">New Castle (US)</span>
<span class="t" style="top:461px;left:1081px;transform:translate(0.30px,0.89px) scale(0.4621,0.5214);">New Glasgow (CA)</span>
<span class="t r" style="top:461px;right:190px;transform:translate(0.30px,0.89px) scale(0.4769,0.5214);">-111,444.25</span>
<span class="t" style="top:461px;left:1320px;transform:translate(0.60px,0.89px) scale(0.4661,0.5214);">2</span>
<svg style="position:absolute;left:294.80px;top:478.24px;" width="12.00" height="12.40" viewBox="0 0 12 12.4"><path d="M1.6 4.3 Q1.5 .45 4.55 .45 Q7.6 .45 7.5 4.3 L8.7 5 Q8.9 7.4 6.9 8.35 Q4.55 9.3 2.2 8.35 Q.2 7.4 .4 5 Z" fill="#555"/><rect x="2.8" y="2.55" width="4.3" height="1.25" rx=".3" fill="#fff"/><path d="M4.9 10.3 Q7.8 10 8.8 8.1 L7.5 7.1 L11.4 5.3 L11.5 9.6 L10.3 8.9 Q8.7 11.8 5 11.6 Z" fill="#2f7fd8" stroke="#2f7fd8" stroke-width=".35" stroke-linejoin="round"/></svg>
<span class="t" style="top:478px;left:310px;transform:translate(0.30px,0.62px) scale(0.586,0.5214);">t</span>
<div class="bx m1" style="left:313.0px;top:481.32px;width:67.0px"></div>
<span class="t" style="top:478px;left:379px;transform:translate(0.60px,0.62px) scale(0.4586,0.5214);">onitor_Test_Jhyun_5</span>
<span class="t" style="top:478px;left:562px;transform:translate(0.80px,0.62px) scale(0.4894,0.5214);">n</span>
<div class="bx m7" style="left:566.0px;top:481.32px;width:52.0px"></div>
<span class="t" style="top:478px;left:754px;transform:translate(0.20px,0.62px) scale(0.4591,0.5214);">TC Out</span>
<span class="t r" style="top:478px;right:549px;transform:translate(0.40px,0.62px) scale(0.456,0.5214);">30.00</span>
<span class="t" style="top:478px;left:961px;transform:translate(0.60px,0.62px) scale(0.4534,0.5214);">New Castle (US)</span>
<span class="t" style="top:478px;left:1081px;transform:translate(0.30px,0.62px) scale(0.4621,0.5214);">New Glasgow (CA)</span>
<span class="t r" style="top:478px;right:190px;transform:translate(0.30px,0.62px) scale(0.4634,0.5214);">-50,536.68</span>
<span class="t" style="top:478px;left:1320px;transform:translate(0.60px,0.62px) scale(0.4661,0.5214);">2</span>
<svg style="position:absolute;left:294.80px;top:494.96px;" width="12.00" height="12.40" viewBox="0 0 12 12.4"><path d="M1.6 4.3 Q1.5 .45 4.55 .45 Q7.6 .45 7.5 4.3 L8.7 5 Q8.9 7.4 6.9 8.35 Q4.55 9.3 2.2 8.35 Q.2 7.4 .4 5 Z" fill="#555"/><rect x="2.8" y="2.55" width="4.3" height="1.25" rx=".3" fill="#fff"/><path d="M4.9 10.3 Q7.8 10 8.8 8.1 L7.5 7.1 L11.4 5.3 L11.5 9.6 L10.3 8.9 Q8.7 11.8 5 11.6 Z" fill="#2f7fd8" stroke="#2f7fd8" stroke-width=".35" stroke-linejoin="round"/></svg>
<span class="t" style="top:495px;left:310px;transform:translate(0.30px,0.34px) scale(0.586,0.5214);">t</span>
<div class="bx m3" style="left:313.0px;top:498.05px;width:67.0px"></div>
<span class="t" style="top:495px;left:379px;transform:translate(0.60px,0.34px) scale(0.4586,0.5214);">onitor_Test_Jhyun_6</span>
<span class="t" style="top:495px;left:562px;transform:translate(0.80px,0.34px) scale(0.4894,0.5214);">n</span>
<div class="bx m1" style="left:566.0px;top:498.05px;width:52.0px"></div>
<span class="t" style="top:495px;left:754px;transform:translate(0.20px,0.34px) scale(0.4591,0.5214);">TC Out</span>
<span class="t r" style="top:495px;right:549px;transform:translate(0.40px,0.34px) scale(0.456,0.5214);">17.18</span>
<span class="t" style="top:495px;left:961px;transform:translate(0.60px,0.34px) scale(0.4534,0.5214);">New Castle (US)</span>
<span class="t" style="top:495px;left:1081px;transform:translate(0.30px,0.34px) scale(0.4621,0.5214);">New Glasgow (CA)</span>
<span class="t r" style="top:495px;right:190px;transform:translate(0.30px,0.34px) scale(0.4769,0.5214);">-111,448.83</span>
<span class="t" style="top:495px;left:1320px;transform:translate(0.60px,0.34px) scale(0.4661,0.5214);">2</span>
<svg style="position:absolute;left:294.80px;top:511.69px;" width="12.00" height="12.40" viewBox="0 0 12 12.4"><path d="M1.6 4.3 Q1.5 .45 4.55 .45 Q7.6 .45 7.5 4.3 L8.7 5 Q8.9 7.4 6.9 8.35 Q4.55 9.3 2.2 8.35 Q.2 7.4 .4 5 Z" fill="#555"/><rect x="2.8" y="2.55" width="4.3" height="1.25" rx=".3" fill="#fff"/><path d="M4.9 10.3 Q7.8 10 8.8 8.1 L7.5 7.1 L11.4 5.3 L11.5 9.6 L10.3 8.9 Q8.7 11.8 5 11.6 Z" fill="#2f7fd8" stroke="#2f7fd8" stroke-width=".35" stroke-linejoin="round"/></svg>
<span class="t" style="top:512px;left:310px;transform:translate(0.30px,0.07px) scale(0.586,0.5214);">t</span>
<div class="bx m5" style="left:313.0px;top:514.77px;width:67.0px"></div>
<span class="t" style="top:512px;left:380px;transform:translate(0.60px,0.07px) scale(0.4125,0.5214);">T</span>
<span class="t" style="top:512px;left:562px;transform:translate(0.80px,0.07px) scale(0.4894,0.5214);">n</span>
<div class="bx m3" style="left:566.0px;top:514.77px;width:52.0px"></div>
<span class="t" style="top:512px;left:754px;transform:translate(0.20px,0.07px) scale(0.4591,0.5214);">TC Out</span>
<span class="t r" style="top:512px;right:549px;transform:translate(0.40px,0.07px) scale(0.456,0.5214);">29.94</span>
<span class="t" style="top:512px;left:961px;transform:translate(0.60px,0.07px) scale(0.4673,0.5214);">New Bedford (US)</span>
<span class="t" style="top:512px;left:1081px;transform:translate(0.30px,0.07px) scale(0.4608,0.5214);">New Castle (AU)</span>
<span class="t r" style="top:512px;right:190px;transform:translate(0.30px,0.07px) scale(0.4531,0.5214);">0.00</span>
<span class="t" style="top:512px;left:1320px;transform:translate(0.60px,0.07px) scale(0.4661,0.5214);">2</span>
<svg style="position:absolute;left:294.80px;top:528.41px;" width="12.00" height="12.40" viewBox="0 0 12 12.4"><path d="M1.6 4.3 Q1.5 .45 4.55 .45 Q7.6 .45 7.5 4.3 L8.7 5 Q8.9 7.4 6.9 8.35 Q4.55 9.3 2.2 8.35 Q.2 7.4 .4 5 Z" fill="#555"/><rect x="2.8" y="2.55" width="4.3" height="1.25" rx=".3" fill="#fff"/><path d="M4.9 10.3 Q7.8 10 8.8 8.1 L7.5 7.1 L11.4 5.3 L11.5 9.6 L10.3 8.9 Q8.7 11.8 5 11.6 Z" fill="#2f7fd8" stroke="#2f7fd8" stroke-width=".35" stroke-linejoin="round"/></svg>
<span class="t" style="top:528px;left:310px;transform:translate(0.30px,0.79px) scale(0.586,0.5214);">t</span>
<div class="bx m7" style="left:313.0px;top:531.50px;width:59.0px"></div>
<span class="t" style="top:528px;left:562px;transform:translate(0.80px,0.79px) scale(0.4982,0.5214);">N</span>
<div class="bx m1" style="left:566.0px;top:531.50px;width:56.0px"></div>
<span class="t" style="top:528px;left:754px;transform:translate(0.20px,0.79px) scale(0.4591,0.5214);">TC Out</span>
<span class="t r" style="top:528px;right:549px;transform:translate(0.40px,0.79px) scale(0.456,0.5214);">30.00</span>
<span class="t" style="top:528px;left:961px;transform:translate(0.60px,0.79px) scale(0.4534,0.5214);">New Castle (US)</span>
<span class="t" style="top:528px;left:1081px;transform:translate(0.30px,0.79px) scale(0.4621,0.5214);">New Glasgow (CA)</span>
<span class="t r" style="top:528px;right:190px;transform:translate(0.30px,0.79px) scale(0.4637,0.5214);">-221,029.23</span>
<span class="t" style="top:528px;left:1320px;transform:translate(0.60px,0.79px) scale(0.4661,0.5214);">2</span>
<svg style="position:absolute;left:294.80px;top:545.14px;" width="12.00" height="12.40" viewBox="0 0 12 12.4"><path d="M1.6 4.3 Q1.5 .45 4.55 .45 Q7.6 .45 7.5 4.3 L8.7 5 Q8.9 7.4 6.9 8.35 Q4.55 9.3 2.2 8.35 Q.2 7.4 .4 5 Z" fill="#555"/><rect x="2.8" y="2.55" width="4.3" height="1.25" rx=".3" fill="#fff"/><path d="M4.9 10.3 Q7.8 10 8.8 8.1 L7.5 7.1 L11.4 5.3 L11.5 9.6 L10.3 8.9 Q8.7 11.8 5 11.6 Z" fill="#2f7fd8" stroke="#2f7fd8" stroke-width=".35" stroke-linejoin="round"/></svg>
<span class="t" style="top:545px;left:310px;transform:translate(0.30px,0.52px) scale(0.586,0.5214);">t</span>
<div class="bx m1" style="left:313.0px;top:548.23px;width:67.0px"></div>
<span class="t" style="top:545px;left:381px;transform:translate(0.60px,0.52px) scale(0.4351,0.5214);">)</span>
<span class="t" style="top:545px;left:562px;transform:translate(0.80px,0.52px) scale(0.4982,0.5214);">N</span>
<div class="bx m3" style="left:566.0px;top:548.23px;width:56.0px"></div>
<span class="t" style="top:545px;left:754px;transform:translate(0.20px,0.52px) scale(0.4591,0.5214);">TC Out</span>
<span class="t r" style="top:545px;right:549px;transform:translate(0.40px,0.52px) scale(0.456,0.5214);">30.00</span>
<span class="t" style="top:545px;left:961px;transform:translate(0.60px,0.52px) scale(0.4534,0.5214);">New Castle (US)</span>
<span class="t" style="top:545px;left:1081px;transform:translate(0.30px,0.52px) scale(0.4621,0.5214);">New Glasgow (CA)</span>
<span class="t r" style="top:545px;right:190px;transform:translate(0.30px,0.52px) scale(0.463,0.5214);">-1,976.60</span>
<span class="t" style="top:545px;left:1320px;transform:translate(0.60px,0.52px) scale(0.4661,0.5214);">2</span>
<svg style="position:absolute;left:294.80px;top:561.86px;" width="12.00" height="12.40" viewBox="0 0 12 12.4"><path d="M1.6 4.3 Q1.5 .45 4.55 .45 Q7.6 .45 7.5 4.3 L8.7 5 Q8.9 7.4 6.9 8.35 Q4.55 9.3 2.2 8.35 Q.2 7.4 .4 5 Z" fill="#555"/><rect x="2.8" y="2.55" width="4.3" height="1.25" rx=".3" fill="#fff"/><path d="M4.9 10.3 Q7.8 10 8.8 8.1 L7.5 7.1 L11.4 5.3 L11.5 9.6 L10.3 8.9 Q8.7 11.8 5 11.6 Z" fill="#2f7fd8" stroke="#2f7fd8" stroke-width=".35" stroke-linejoin="round"/></svg>
<span class="t" style="top:562px;left:310px;transform:translate(0.30px,0.24px) scale(0.4125,0.5214);">T</span>
<div class="bx m3" style="left:313.0px;top:564.95px;width:67.0px"></div>
<span class="t" style="top:562px;left:378px;transform:translate(0.80px,0.24px) scale(0.4807,0.5214);">06-25</span>
<span class="t" style="top:562px;left:562px;transform:translate(0.80px,0.24px) scale(0.4125,0.5214);">T</span>
<div class="bx m1" style="left:566.0px;top:564.95px;width:60.0px"></div>
<span class="t" style="top:562px;left:754px;transform:translate(0.20px,0.24px) scale(0.4591,0.5214);">TC Out</span>
<span class="t r" style="top:562px;right:549px;transform:translate(0.40px,0.24px) scale(0.456,0.5214);">32.66</span>
<span class="t" style="top:562px;left:961px;transform:translate(0.60px,0.24px) scale(0.4632,0.5214);">Barranquilla (CO)</span>
<span class="t" style="top:562px;left:1081px;transform:translate(0.30px,0.24px) scale(0.4458,0.5214);">Ghent (BE)</span>
<span class="t r" style="top:562px;right:190px;transform:translate(0.30px,0.24px) scale(0.4634,0.5214);">-26,968.88</span>
<span class="t" style="top:562px;left:1320px;transform:translate(0.60px,0.24px) scale(0.4661,0.5214);">2</span>
<svg style="position:absolute;left:294.80px;top:578.59px;" width="12.00" height="12.40" viewBox="0 0 12 12.4"><path d="M.45 5.95 H11 L9.9 8.75 Q9.6 9.55 8.7 9.55 H2.6 Q1.7 9.55 1.3 8.8 Z" fill="#525252"/><path d="M.5 2.4 H2.85 V6.4 H.5 Z M1.45 1.1 H2 V2.6 H1.45 Z" fill="#5a5a5a"/><path d="M3.2 4 L5 4 L6 3.2 L7 3.8 L9.3 3.8 V6 H3.2 Z" fill="#72a8e2"/><path d="M3.2 5.1 H9.3 V6.1 H3.2 Z" fill="#5a96d8"/></svg>
<span class="t" style="top:578px;left:310px;transform:translate(0.30px,0.97px) scale(0.586,0.5214);">t</span>
<div class="bx m2" style="left:313.0px;top:581.67px;width:8.0px"></div>
<span class="t" style="top:578px;left:562px;transform:translate(0.80px,0.97px) scale(0.3826,0.5214);">S</span>
<div class="bx m3" style="left:566.0px;top:581.67px;width:36.0px"></div>
<span class="t r" style="top:578px;right:549px;transform:translate(0.40px,0.97px) scale(0.4531,0.5214);">0.00</span>
<span class="t" style="top:578px;left:961px;transform:translate(0.60px,0.97px) scale(0.4691,0.5214);">New Amsterdam (GY)</span>
<span class="t" style="top:578px;left:1081px;transform:translate(0.30px,0.97px) scale(0.4673,0.5214);">New Bedford (US)</span>
<span class="t r" style="top:578px;right:190px;transform:translate(0.30px,0.97px) scale(0.4637,0.5214);">-296,598.46</span>
<span class="t" style="top:578px;left:1320px;transform:translate(0.60px,0.97px) scale(0.4661,0.5214);">2</span>
<svg style="position:absolute;left:294.80px;top:595.31px;" width="12.00" height="12.40" viewBox="0 0 12 12.4"><path d="M1.6 4.3 Q1.5 .45 4.55 .45 Q7.6 .45 7.5 4.3 L8.7 5 Q8.9 7.4 6.9 8.35 Q4.55 9.3 2.2 8.35 Q.2 7.4 .4 5 Z" fill="#555"/><rect x="2.8" y="2.55" width="4.3" height="1.25" rx=".3" fill="#fff"/><path d="M4.9 10.3 Q7.8 10 8.8 8.1 L7.5 7.1 L11.4 5.3 L11.5 9.6 L10.3 8.9 Q8.7 11.8 5 11.6 Z" fill="#2f7fd8" stroke="#2f7fd8" stroke-width=".35" stroke-linejoin="round"/></svg>
<span class="t" style="top:595px;left:310px;transform:translate(0.30px,0.69px) scale(0.4125,0.5214);">T</span>
<div class="bx m4" style="left:313.0px;top:598.40px;width:24.0px"></div>
<div class="bx m1" style="left:566.0px;top:598.40px;width:40.0px"></div>
<span class="t" style="top:595px;left:659px;transform:translate(0.00px,0.69px) scale(0.4661,0.5214);">100</span>
<span class="t" style="top:595px;left:754px;transform:translate(0.20px,0.69px) scale(0.4591,0.5214);">TC Out</span>
<span class="t r" style="top:595px;right:549px;transform:translate(0.40px,0.69px) scale(0.456,0.5214);">30.00</span>
<span class="t" style="top:595px;left:961px;transform:translate(0.60px,0.69px) scale(0.4356,0.5214);">Pusan (KR)</span>
<span class="t" style="top:595px;left:1081px;transform:translate(0.30px,0.69px) scale(0.4597,0.5214);">Shanghai (CN)</span>
<span class="t r" style="top:595px;right:190px;transform:translate(0.30px,0.69px) scale(0.4531,0.5214);">0.00</span>
<span class="t" style="top:595px;left:1320px;transform:translate(0.60px,0.69px) scale(0.4661,0.5214);">2</span>
<svg style="position:absolute;left:294.80px;top:612.04px;" width="12.00" height="12.40" viewBox="0 0 12 12.4"><path d="M.45 5.95 H11 L9.9 8.75 Q9.6 9.55 8.7 9.55 H2.6 Q1.7 9.55 1.3 8.8 Z" fill="#525252"/><path d="M.5 2.4 H2.85 V6.4 H.5 Z M1.45 1.1 H2 V2.6 H1.45 Z" fill="#5a5a5a"/><path d="M3.2 4 L5 4 L6 3.2 L7 3.8 L9.3 3.8 V6 H3.2 Z" fill="#72a8e2"/><path d="M3.2 5.1 H9.3 V6.1 H3.2 Z" fill="#5a96d8"/></svg>
<span class="t" style="top:612px;left:310px;transform:translate(0.30px,0.42px) scale(0.4603,0.5214);">v</span>
<div class="bx m6" style="left:313.0px;top:615.12px;width:32.0px"></div>
<span class="t" style="top:612px;left:562px;transform:translate(0.80px,0.42px) scale(0.4603,0.5214);">v</span>
<div class="bx m7" style="left:566.0px;top:615.12px;width:52.0px"></div>
<span class="t" style="top:612px;left:659px;transform:translate(0.00px,0.42px) scale(0.464,0.5214);">Ace Logistics</span>
<span class="t" style="top:612px;left:754px;transform:translate(0.20px,0.42px) scale(0.4679,0.5214);">Coal in Bulk</span>
<span class="t r" style="top:612px;right:549px;transform:translate(0.40px,0.42px) scale(0.4548,0.5214);">72,000.00</span>
<span class="t" style="top:612px;left:961px;transform:translate(0.60px,0.42px) scale(0.4764,0.5214);">Taboneo (ID)</span>
<span class="t" style="top:612px;left:1081px;transform:translate(0.30px,0.42px) scale(0.4665,0.5214);">Guangzhou (CN)</span>
<span class="t r" style="top:612px;right:190px;transform:translate(0.30px,0.42px) scale(0.46,0.5214);">-2,048,557.31</span>
<span class="t" style="top:612px;left:1320px;transform:translate(0.60px,0.42px) scale(0.4661,0.5214);">2</span>
<svg style="position:absolute;left:294.80px;top:628.76px;" width="12.00" height="12.40" viewBox="0 0 12 12.4"><path d="M.45 5.95 H11 L9.9 8.75 Q9.6 9.55 8.7 9.55 H2.6 Q1.7 9.55 1.3 8.8 Z" fill="#525252"/><path d="M.5 2.4 H2.85 V6.4 H.5 Z M1.45 1.1 H2 V2.6 H1.45 Z" fill="#5a5a5a"/><path d="M3.2 4 L5 4 L6 3.2 L7 3.8 L9.3 3.8 V6 H3.2 Z" fill="#72a8e2"/><path d="M3.2 5.1 H9.3 V6.1 H3.2 Z" fill="#5a96d8"/></svg>
<span class="t" style="top:629px;left:310px;transform:translate(0.30px,0.14px) scale(0.4603,0.5214);">v</span>
<div class="bx m3" style="left:313.0px;top:631.85px;width:67.0px"></div>
<span class="t" style="top:629px;left:562px;transform:translate(0.80px,0.14px) scale(0.4894,0.5214);">n</span>
<div class="bx m1" style="left:566.0px;top:631.85px;width:52.0px"></div>
<span class="t r" style="top:629px;right:549px;transform:translate(0.40px,0.14px) scale(0.4531,0.5214);">0.00</span>
<span class="t" style="top:629px;left:961px;transform:translate(0.60px,0.14px) scale(0.463,0.5214);">New Bedford (US), New...</span>
<span class="t" style="top:629px;left:1081px;transform:translate(0.30px,0.14px) scale(0.4539,0.5214);">New Castle (US), New Haven (...</span>
<span class="t r" style="top:629px;right:190px;transform:translate(0.30px,0.14px) scale(0.4637,0.5214);">-133,653.65</span>
<span class="t" style="top:629px;left:1320px;transform:translate(0.60px,0.14px) scale(0.4661,0.5214);">2</span>
<svg style="position:absolute;left:294.80px;top:645.49px;" width="12.00" height="12.40" viewBox="0 0 12 12.4"><path d="M.45 5.95 H11 L9.9 8.75 Q9.6 9.55 8.7 9.55 H2.6 Q1.7 9.55 1.3 8.8 Z" fill="#525252"/><path d="M.5 2.4 H2.85 V6.4 H.5 Z M1.45 1.1 H2 V2.6 H1.45 Z" fill="#5a5a5a"/><path d="M3.2 4 L5 4 L6 3.2 L7 3.8 L9.3 3.8 V6 H3.2 Z" fill="#72a8e2"/><path d="M3.2 5.1 H9.3 V6.1 H3.2 Z" fill="#5a96d8"/></svg>
<span class="t" style="top:645px;left:310px;transform:translate(0.30px,0.87px) scale(0.4603,0.5214);">v</span>
<div class="bx m6" style="left:313.0px;top:648.58px;width:52.0px"></div>
<span class="t" style="top:645px;left:562px;transform:translate(0.80px,0.87px) scale(0.5084,0.5214);">p</span>
<div class="bx m7" style="left:566.0px;top:648.58px;width:40.0px"></div>
<span class="t" style="top:645px;left:659px;transform:translate(0.00px,0.87px) scale(0.469,0.5214);">Coal Trader, netpas</span>
<span class="t" style="top:645px;left:754px;transform:translate(0.20px,0.87px) scale(0.4679,0.5214);">Coal in Bulk</span>
<span class="t r" style="top:645px;right:549px;transform:translate(0.40px,0.87px) scale(0.4548,0.5214);">51,000.00</span>
<span class="t" style="top:645px;left:961px;transform:translate(0.60px,0.87px) scale(0.4556,0.5214);">Taboneo (ID), Pusan (KR)</span>
<span class="t" style="top:645px;left:1081px;transform:translate(0.30px,0.87px) scale(0.4606,0.5214);">Incheon (KR), Guangzhou (CN)</span>
<span class="t r" style="top:645px;right:190px;transform:translate(0.30px,0.87px) scale(0.4561,0.5214);">101,897.31</span>
<span class="t" style="top:645px;left:1320px;transform:translate(0.60px,0.87px) scale(0.4661,0.5214);">2</span>
<svg style="position:absolute;left:294.80px;top:662.21px;" width="12.00" height="12.40" viewBox="0 0 12 12.4"><path d="M.45 5.95 H11 L9.9 8.75 Q9.6 9.55 8.7 9.55 H2.6 Q1.7 9.55 1.3 8.8 Z" fill="#525252"/><path d="M.5 2.4 H2.85 V6.4 H.5 Z M1.45 1.1 H2 V2.6 H1.45 Z" fill="#5a5a5a"/><path d="M3.2 4 L5 4 L6 3.2 L7 3.8 L9.3 3.8 V6 H3.2 Z" fill="#72a8e2"/><path d="M3.2 5.1 H9.3 V6.1 H3.2 Z" fill="#5a96d8"/></svg>
<span class="t" style="top:662px;left:310px;transform:translate(0.30px,0.59px) scale(0.4603,0.5214);">v</span>
<div class="bx m7" style="left:313.0px;top:665.30px;width:67.0px"></div>
<span class="t" style="top:662px;left:380px;transform:translate(0.40px,0.59px) scale(0.459,0.5214);">r_Test_jhyun</span>
<span class="t" style="top:662px;left:562px;transform:translate(0.80px,0.59px) scale(0.4894,0.5214);">n</span>
<div class="bx m5" style="left:566.0px;top:665.30px;width:52.0px"></div>
<span class="t r" style="top:662px;right:549px;transform:translate(0.40px,0.59px) scale(0.4548,0.5214);">18,000.00</span>
<span class="t" style="top:662px;left:961px;transform:translate(0.60px,0.59px) scale(0.4622,0.5214);">New Amsterdam (GY), N...</span>
<span class="t" style="top:662px;left:1081px;transform:translate(0.30px,0.59px) scale(0.4593,0.5214);">New Bedford (US), New Glasg...</span>
<span class="t r" style="top:662px;right:190px;transform:translate(0.30px,0.59px) scale(0.4634,0.5214);">-40,453.00</span>
<span class="t" style="top:662px;left:1320px;transform:translate(0.60px,0.59px) scale(0.4661,0.5214);">2</span>
<svg style="position:absolute;left:294.80px;top:678.94px;" width="12.00" height="12.40" viewBox="0 0 12 12.4"><path d="M.45 5.95 H11 L9.9 8.75 Q9.6 9.55 8.7 9.55 H2.6 Q1.7 9.55 1.3 8.8 Z" fill="#525252"/><path d="M.5 2.4 H2.85 V6.4 H.5 Z M1.45 1.1 H2 V2.6 H1.45 Z" fill="#5a5a5a"/><path d="M3.2 4 L5 4 L6 3.2 L7 3.8 L9.3 3.8 V6 H3.2 Z" fill="#72a8e2"/><path d="M3.2 5.1 H9.3 V6.1 H3.2 Z" fill="#5a96d8"/></svg>
<span class="t" style="top:679px;left:310px;transform:translate(0.30px,0.32px) scale(0.4603,0.5214);">v</span>
<div class="bx m1" style="left:313.0px;top:682.02px;width:67.0px"></div>
<span class="t" style="top:679px;left:380px;transform:translate(0.60px,0.32px) scale(0.4558,0.5214);">onExpense</span>
<span class="t" style="top:679px;left:562px;transform:translate(0.80px,0.32px) scale(0.4982,0.5214);">N</span>
<div class="bx m3" style="left:566.0px;top:682.02px;width:56.0px"></div>
<span class="t" style="top:679px;left:659px;transform:translate(0.00px,0.32px) scale(0.4661,0.5214);">100</span>
<span class="t" style="top:679px;left:754px;transform:translate(0.20px,0.32px) scale(0.4748,0.5214);">new</span>
<span class="t r" style="top:679px;right:549px;transform:translate(0.40px,0.32px) scale(0.4531,0.5214);">0.00</span>
<span class="t" style="top:679px;left:961px;transform:translate(0.60px,0.32px) scale(0.4622,0.5214);">New Amsterdam (GY), N...</span>
<span class="t" style="top:679px;left:1081px;transform:translate(0.30px,0.32px) scale(0.4593,0.5214);">New Bedford (US), New Glasg...</span>
<span class="t r" style="top:679px;right:190px;transform:translate(0.30px,0.32px) scale(0.463,0.5214);">-8,000.00</span>
<span class="t" style="top:679px;left:1320px;transform:translate(0.60px,0.32px) scale(0.4661,0.5214);">2</span>
<svg style="position:absolute;left:294.80px;top:695.66px;" width="12.00" height="12.40" viewBox="0 0 12 12.4"><path d="M.45 5.95 H11 L9.9 8.75 Q9.6 9.55 8.7 9.55 H2.6 Q1.7 9.55 1.3 8.8 Z" fill="#525252"/><path d="M.5 2.4 H2.85 V6.4 H.5 Z M1.45 1.1 H2 V2.6 H1.45 Z" fill="#5a5a5a"/><path d="M3.2 4 L5 4 L6 3.2 L7 3.8 L9.3 3.8 V6 H3.2 Z" fill="#72a8e2"/><path d="M3.2 5.1 H9.3 V6.1 H3.2 Z" fill="#5a96d8"/></svg>
<span class="t" style="top:696px;left:310px;transform:translate(0.30px,0.04px) scale(0.4603,0.5214);">v</span>
<div class="bx m3" style="left:313.0px;top:698.75px;width:67.0px"></div>
<span class="t" style="top:696px;left:379px;transform:translate(0.40px,0.04px) scale(0.4826,0.5214);">Account</span>
<span class="t" style="top:696px;left:562px;transform:translate(0.80px,0.04px) scale(0.4894,0.5214);">n</span>
<div class="bx m5" style="left:566.0px;top:698.75px;width:56.0px"></div>
<span class="t" style="top:696px;left:659px;transform:translate(0.00px,0.04px) scale(0.4161,0.5214);">TTTTEst, TTTTTT</span>
<span class="t r" style="top:696px;right:549px;transform:translate(0.40px,0.04px) scale(0.4531,0.5214);">0.00</span>
<span class="t" style="top:696px;left:961px;transform:translate(0.60px,0.04px) scale(0.4691,0.5214);">New Amsterdam (GY)</span>
<span class="t" style="top:696px;left:1081px;transform:translate(0.30px,0.04px) scale(0.4673,0.5214);">New Bedford (US)</span>
<span class="t r" style="top:696px;right:190px;transform:translate(0.30px,0.04px) scale(0.4531,0.5214);">0.00</span>
<span class="t" style="top:696px;left:1320px;transform:translate(0.60px,0.04px) scale(0.4661,0.5214);">2</span>
<svg style="position:absolute;left:294.80px;top:712.39px;" width="12.00" height="12.40" viewBox="0 0 12 12.4"><path d="M.45 5.95 H11 L9.9 8.75 Q9.6 9.55 8.7 9.55 H2.6 Q1.7 9.55 1.3 8.8 Z" fill="#525252"/><path d="M.5 2.4 H2.85 V6.4 H.5 Z M1.45 1.1 H2 V2.6 H1.45 Z" fill="#5a5a5a"/><path d="M3.2 4 L5 4 L6 3.2 L7 3.8 L9.3 3.8 V6 H3.2 Z" fill="#72a8e2"/><path d="M3.2 5.1 H9.3 V6.1 H3.2 Z" fill="#5a96d8"/></svg>
<span class="t" style="top:712px;left:310px;transform:translate(0.30px,0.77px) scale(0.4603,0.5214);">v</span>
<div class="bx m6" style="left:313.0px;top:715.48px;width:68.0px"></div>
<span class="t" style="top:712px;left:562px;transform:translate(0.80px,0.77px) scale(0.4125,0.5214);">T</span>
<div class="bx m5" style="left:566.0px;top:715.48px;width:62.0px"></div>
<span class="t" style="top:712px;left:628px;transform:translate(0.80px,0.77px) scale(0.466,0.5214);">O</span>
<span class="t r" style="top:712px;right:549px;transform:translate(0.40px,0.77px) scale(0.4531,0.5214);">0.00</span>
<span class="t" style="top:712px;left:961px;transform:translate(0.60px,0.77px) scale(0.4531,0.5214);">Alexandria (EG)</span>
<span class="t" style="top:712px;left:1081px;transform:translate(0.30px,0.77px) scale(0.4662,0.5214);">Houston (US)</span>
<span class="t r" style="top:712px;right:190px;transform:translate(0.30px,0.77px) scale(0.4702,0.5214);">-298,117.85</span>
<span class="t" style="top:712px;left:1320px;transform:translate(0.60px,0.77px) scale(0.4661,0.5214);">2</span>
<svg style="position:absolute;left:294.80px;top:729.11px;" width="12.00" height="12.40" viewBox="0 0 12 12.4"><path d="M.45 5.95 H11 L9.9 8.75 Q9.6 9.55 8.7 9.55 H2.6 Q1.7 9.55 1.3 8.8 Z" fill="#525252"/><path d="M.5 2.4 H2.85 V6.4 H.5 Z M1.45 1.1 H2 V2.6 H1.45 Z" fill="#5a5a5a"/><path d="M3.2 4 L5 4 L6 3.2 L7 3.8 L9.3 3.8 V6 H3.2 Z" fill="#72a8e2"/><path d="M3.2 5.1 H9.3 V6.1 H3.2 Z" fill="#5a96d8"/></svg>
<span class="t" style="top:729px;left:310px;transform:translate(0.30px,0.49px) scale(0.4603,0.5214);">v</span>
<div class="bx m3" style="left:313.0px;top:732.20px;width:63.0px"></div>
<span class="t" style="top:729px;left:562px;transform:translate(0.80px,0.49px) scale(0.586,0.5214);">t</span>
<div class="bx m1" style="left:566.0px;top:732.20px;width:32.0px"></div>
<span class="t r" style="top:729px;right:549px;transform:translate(0.40px,0.49px) scale(0.458,0.5214);">500.00</span>
<span class="t" style="top:729px;left:961px;transform:translate(0.60px,0.49px) scale(0.4691,0.5214);">New Amsterdam (GY)</span>
<span class="t" style="top:729px;left:1081px;transform:translate(0.30px,0.49px) scale(0.4673,0.5214);">New Bedford (US)</span>
<span class="t r" style="top:729px;right:190px;transform:translate(0.30px,0.49px) scale(0.4548,0.5214);">65,500.00</span>
<span class="t" style="top:729px;left:1320px;transform:translate(0.60px,0.49px) scale(0.4661,0.5214);">2</span>
<svg style="position:absolute;left:294.80px;top:745.84px;" width="12.00" height="12.40" viewBox="0 0 12 12.4"><path d="M.45 5.95 H11 L9.9 8.75 Q9.6 9.55 8.7 9.55 H2.6 Q1.7 9.55 1.3 8.8 Z" fill="#525252"/><path d="M.5 2.4 H2.85 V6.4 H.5 Z M1.45 1.1 H2 V2.6 H1.45 Z" fill="#5a5a5a"/><path d="M3.2 4 L5 4 L6 3.2 L7 3.8 L9.3 3.8 V6 H3.2 Z" fill="#72a8e2"/><path d="M3.2 5.1 H9.3 V6.1 H3.2 Z" fill="#5a96d8"/></svg>
<span class="t" style="top:746px;left:310px;transform:translate(0.30px,0.22px) scale(0.4603,0.5214);">v</span>
<div class="bx m2" style="left:313.0px;top:748.93px;width:44.0px"></div>
<span class="t" style="top:746px;left:562px;transform:translate(0.80px,0.22px) scale(0.4894,0.5214);">n</span>
<div class="bx m7" style="left:566.0px;top:748.93px;width:52.0px"></div>
<span class="t r" style="top:746px;right:549px;transform:translate(0.40px,0.22px) scale(0.4548,0.5214);">40,000.00</span>
<span class="t" style="top:746px;left:961px;transform:translate(0.60px,0.22px) scale(0.4622,0.5214);">New Amsterdam (GY), N...</span>
<span class="t" style="top:746px;left:1081px;transform:translate(0.30px,0.22px) scale(0.4593,0.5214);">New Bedford (US), New Glasg...</span>
<span class="t r" style="top:746px;right:190px;transform:translate(0.30px,0.22px) scale(0.4561,0.5214);">122,675.61</span>
<span class="t" style="top:746px;left:1320px;transform:translate(0.60px,0.22px) scale(0.4661,0.5214);">2</span>
<svg style="position:absolute;left:294.80px;top:762.56px;" width="12.00" height="12.40" viewBox="0 0 12 12.4"><path d="M.45 5.95 H11 L9.9 8.75 Q9.6 9.55 8.7 9.55 H2.6 Q1.7 9.55 1.3 8.8 Z" fill="#525252"/><path d="M.5 2.4 H2.85 V6.4 H.5 Z M1.45 1.1 H2 V2.6 H1.45 Z" fill="#5a5a5a"/><path d="M3.2 4 L5 4 L6 3.2 L7 3.8 L9.3 3.8 V6 H3.2 Z" fill="#72a8e2"/><path d="M3.2 5.1 H9.3 V6.1 H3.2 Z" fill="#5a96d8"/></svg>
<span class="t" style="top:762px;left:310px;transform:translate(0.30px,0.94px) scale(0.4603,0.5214);">v</span>
<div class="bx m4" style="left:313.0px;top:765.65px;width:60.0px"></div>
<span class="t" style="top:762px;left:562px;transform:translate(0.80px,0.94px) scale(0.4894,0.5214);">n</span>
<div class="bx m1" style="left:566.0px;top:765.65px;width:52.0px"></div>
<span class="t r" style="top:762px;right:549px;transform:translate(0.40px,0.94px) scale(0.4531,0.5214);">0.00</span>
<span class="t" style="top:762px;left:961px;transform:translate(0.60px,0.94px) scale(0.4571,0.5214);">Liepaja (LV)</span>
<span class="t" style="top:762px;left:1081px;transform:translate(0.30px,0.94px) scale(0.4568,0.5214);">Skikda (DZ)</span>
<span class="t r" style="top:762px;right:190px;transform:translate(0.30px,0.94px) scale(0.463,0.5214);">-4,500.00</span>
<span class="t" style="top:762px;left:1320px;transform:translate(0.60px,0.94px) scale(0.4661,0.5214);">2</span>
<svg style="position:absolute;left:294.80px;top:779.29px;" width="12.00" height="12.40" viewBox="0 0 12 12.4"><path d="M.45 5.95 H11 L9.9 8.75 Q9.6 9.55 8.7 9.55 H2.6 Q1.7 9.55 1.3 8.8 Z" fill="#525252"/><path d="M.5 2.4 H2.85 V6.4 H.5 Z M1.45 1.1 H2 V2.6 H1.45 Z" fill="#5a5a5a"/><path d="M3.2 4 L5 4 L6 3.2 L7 3.8 L9.3 3.8 V6 H3.2 Z" fill="#72a8e2"/><path d="M3.2 5.1 H9.3 V6.1 H3.2 Z" fill="#5a96d8"/></svg>
<span class="t" style="top:779px;left:310px;transform:translate(0.30px,0.67px) scale(0.4725,0.5214);">voyage</span>
<div class="bx m2" style="left:313.0px;top:782.38px;width:48.0px"></div>
<span class="t" style="top:779px;left:562px;transform:translate(0.80px,0.67px) scale(0.4603,0.5214);">v</span>
<div class="bx m3" style="left:566.0px;top:782.38px;width:52.0px"></div>
<span class="t" style="top:779px;left:659px;transform:translate(0.00px,0.67px) scale(0.472,0.5214);">General Trading</span>
<span class="t" style="top:779px;left:754px;transform:translate(0.20px,0.67px) scale(0.4508,0.5214);">General Cargo, Ste...</span>
<span class="t r" style="top:779px;right:549px;transform:translate(0.40px,0.67px) scale(0.4548,0.5214);">65,000.00</span>
<span class="t" style="top:779px;left:961px;transform:translate(0.60px,0.67px) scale(0.4487,0.5214);">Rizhao (CN), Shanghai (C...</span>
<span class="t" style="top:779px;left:1081px;transform:translate(0.30px,0.67px) scale(0.4598,0.5214);">Ravenna (IT), Rotterdam (NL)</span>
<span class="t r" style="top:779px;right:190px;transform:translate(0.30px,0.67px) scale(0.4637,0.5214);">-204,512.55</span>
<span class="t" style="top:779px;left:1320px;transform:translate(0.60px,0.67px) scale(0.4661,0.5214);">2</span>
<svg style="position:absolute;left:294.80px;top:796.01px;" width="12.00" height="12.40" viewBox="0 0 12 12.4"><path d="M.45 5.95 H11 L9.9 8.75 Q9.6 9.55 8.7 9.55 H2.6 Q1.7 9.55 1.3 8.8 Z" fill="#525252"/><path d="M.5 2.4 H2.85 V6.4 H.5 Z M1.45 1.1 H2 V2.6 H1.45 Z" fill="#5a5a5a"/><path d="M3.2 4 L5 4 L6 3.2 L7 3.8 L9.3 3.8 V6 H3.2 Z" fill="#72a8e2"/><path d="M3.2 5.1 H9.3 V6.1 H3.2 Z" fill="#5a96d8"/></svg>
<span class="t" style="top:796px;left:310px;transform:translate(0.30px,0.39px) scale(0.4828,0.5214);">voyage1tabcolor</span>
<span class="t" style="top:796px;left:562px;transform:translate(0.80px,0.39px) scale(0.4753,0.5214);">001 test</span>
<span class="t r" style="top:796px;right:549px;transform:translate(0.40px,0.39px) scale(0.4531,0.5214);">0.00</span>
<span class="t r" style="top:796px;right:190px;transform:translate(0.30px,0.39px) scale(0.4637,0.5214);">-130,885.82</span>
<span class="t" style="top:796px;left:1320px;transform:translate(0.60px,0.39px) scale(0.4661,0.5214);">2</span></div>
<svg style="position:absolute;left:0.00px;top:0.00px;" width="1503.00" height="846.00" viewBox="0 0 1503 846"><rect x="276.3" y="806.5" width="761.7" height="3.8" fill="#b4b4b4"/><rect x="1321" y="337" width="3.7" height="396" fill="#787878" fill-opacity=".6"/></svg>
<span class="t" style="top:816px;left:276px;transform:translate(0.20px,0.29px) scale(0.4791,0.5214);">Total : 76</span>
<div style="position:absolute;left:0;top:0;width:1503px;height:846px;clip-path:inset(0 15.0px 0 0)"><svg style="position:absolute;left:1475.80px;top:78.80px;" width="8.40" height="8.40" viewBox="0 0 8.4 8.4"><path d="M.8 .8 L7.6 7.6 M7.6 .8 L.8 7.6" stroke="#333" stroke-width="1.2" fill="none"/></svg>
<svg style="position:absolute;left:1370.60px;top:99.20px;" width="22.20" height="16.40" viewBox="0 0 22.2 16.4"><path d="M.6 10.2 H21.6 L19.4 15 Q19 15.8 18 15.8 H3.6 Q2.6 15.8 2.2 15 Z" fill="#4a4a4a"/><path d="M2.4 3.4 H5 V9.4 H2.4 Z M3.3 .6 H4 V3.4 H3.3 Z" fill="#4a4a4a"/><path d="M3 4.4 H3.8 V5.4 H3 Z M3 6.4 H3.8 V7.4 H3 Z" fill="#fff"/><path d="M6.4 6.2 H9.6 V9.4 H6.4 Z M14.6 6.8 H18.6 V9.4 H14.6 Z" fill="#5b9be0"/><path d="M10.2 5 H14 V9.4 H10.2 Z" fill="#2f73c4"/></svg>
<span class="t b" style="top:101px;left:1398px;transform:translate(0.20px,0.00px) scale(0.4301,0.5);font-size:26px;line-height:31px;color:#383838">Test_Full</span>
<span class="t b" style="top:144px;left:1338px;transform:translate(0.20px,0.79px) scale(0.4538,0.5214);">Status</span>
<span class="t" style="top:144px;left:1405px;transform:translate(0.80px,0.79px) scale(0.495,0.5214);">Ongoing</span>
<span class="t b" style="top:165px;left:1338px;transform:translate(0.20px,0.59px) scale(0.4619,0.5214);">Vessel Name</span>
<span class="t" style="top:165px;left:1405px;transform:translate(0.80px,0.59px) scale(0.4473,0.5214);">NETPAS Test</span>
<span class="t b" style="top:194px;left:1338px;transform:translate(0.20px,0.99px) scale(0.4643,0.5214);">Account</span>
<span class="t" style="top:194px;left:1405px;transform:translate(0.80px,0.99px) scale(0.44,0.5214);">aaa</span>
<span class="t b" style="top:215px;left:1338px;transform:translate(0.20px,0.79px) scale(0.4698,0.5214);">Cargo</span>
<span class="t" style="top:215px;left:1405px;transform:translate(0.80px,0.79px) scale(0.4893,0.5214);">bbb,</span>
<span class="t" style="top:228px;left:1405px;transform:translate(0.80px,0.49px) scale(0.4444,0.5214);">ccc</span>
<span class="t b" style="top:249px;left:1338px;transform:translate(0.20px,0.29px) scale(0.4795,0.5214);">Quantity</span>
<span class="t" style="top:249px;left:1405px;transform:translate(0.80px,0.29px) scale(0.4561,0.5214);">550,000.00</span>
<span class="t b" style="top:278px;left:1338px;transform:translate(0.20px,0.99px) scale(0.4679,0.5214);">Loading</span>
<span class="t" style="top:278px;left:1405px;transform:translate(0.80px,0.99px) scale(0.4827,0.5214);">New Amsterdam &lt;Guyana&gt;</span>
<span class="t" style="top:291px;left:1405px;transform:translate(0.80px,0.75px) scale(0.4741,0.5214);">New Castle (AU) &lt;Australia&gt;</span>
<span class="t" style="top:304px;left:1405px;transform:translate(0.80px,0.51px) scale(0.4738,0.5214);">New Bedford &lt;U.S.A - Massachusetts&gt;</span>
<span class="t" style="top:317px;left:1405px;transform:translate(0.80px,0.27px) scale(0.4745,0.5214);">New Glasgow &lt;Canada&gt;</span>
<span class="t" style="top:330px;left:1405px;transform:translate(0.80px,0.03px) scale(0.4827,0.5214);">New York &lt;U.S.A - New York&gt;</span>
<span class="t b" style="top:350px;left:1338px;transform:translate(0.20px,0.49px) scale(0.4643,0.5214);">Discharging</span>
<span class="t" style="top:350px;left:1405px;transform:translate(0.80px,0.49px) scale(0.4738,0.5214);">New Bedford &lt;U.S.A - Massachusetts&gt;</span>
<span class="t" style="top:363px;left:1405px;transform:translate(0.80px,0.25px) scale(0.4745,0.5214);">New Glasgow &lt;Canada&gt;</span>
<span class="t" style="top:376px;left:1405px;transform:translate(0.80px,0.01px) scale(0.4819,0.5214);">Incheon &lt;South Korea&gt;</span>
<span class="t" style="top:388px;left:1405px;transform:translate(0.80px,0.77px) scale(0.4851,0.5214);">Mobile &lt;U.S.A - Alabama&gt;</span>
<span class="t" style="top:401px;left:1405px;transform:translate(0.80px,0.53px) scale(0.4827,0.5214);">New Amsterdam &lt;Guyana&gt;</span>
<span class="t" style="top:414px;left:1405px;transform:translate(0.80px,0.29px) scale(0.4741,0.5214);">New Castle (AU) &lt;Australia&gt;</span>
<span class="t b" style="top:443px;left:1338px;transform:translate(0.20px,0.59px) scale(0.4636,0.5214);">Profit / Loss</span>
<span class="t" style="top:443px;left:1405px;transform:translate(0.80px,0.59px) scale(0.4561,0.5214);">€354,545,583.36</span>
<span class="t b" style="top:474px;left:1338px;transform:translate(0.20px,0.79px) scale(0.4772,0.5214);">Commenced</span>
<span class="t" style="top:474px;left:1405px;transform:translate(0.80px,0.79px) scale(0.4727,0.5214);">2024-01-01 00:00</span>
<span class="t b" style="top:498px;left:1338px;transform:translate(0.20px,0.79px) scale(0.4829,0.5214);">Completed</span>
<span class="t" style="top:498px;left:1405px;transform:translate(0.80px,0.79px) scale(0.4727,0.5214);">2025-04-24 10:21</span>
<span class="t b" style="top:529px;left:1338px;transform:translate(0.20px,0.49px) scale(0.4766,0.5214);">Author</span>
<span class="t" style="top:529px;left:1405px;transform:translate(0.80px,0.49px) scale(0.484,0.5214);">jhyuntest2</span>
<span class="t b" style="top:551px;left:1338px;transform:translate(0.20px,0.59px) scale(0.4896,0.5214);">Updated</span>
<span class="t" style="top:551px;left:1405px;transform:translate(0.80px,0.59px) scale(0.4727,0.5214);">2025-03-12 17:19</span>
<svg style="position:absolute;left:1338.20px;top:582.60px;" width="12.00" height="12.40" viewBox="0 0 12 12.4"><circle cx="3.9" cy="4.35" r="3.45" fill="#f5922f"/><circle cx="8" cy="8.4" r="3.45" fill="#f5922f"/><path d="M4.9 3.1 A1.6 1.6 0 1 0 4.9 5.6" fill="none" stroke="#d5e3f0" stroke-width=".8"/><path d="M9 7.4 Q8 6.6 7.3 7.5 Q7 8.3 8 8.5 Q9 8.8 8.7 9.5 Q8 10.2 7 9.4" fill="none" stroke="#d5e3f0" stroke-width=".8"/></svg>
<span class="t" style="top:583px;left:1355px;transform:translate(0.00px,0.29px) scale(0.4757,0.5214);">This Operation is not included in statistics because main currency</span>
<span class="t" style="top:595px;left:1355px;transform:translate(0.00px,0.79px) scale(0.4765,0.5214);">is not the same as default main currency.</span></div>
<svg style="position:absolute;left:1493.40px;top:836.60px;" width="7.40" height="7.40" viewBox="0 0 7.4 7.4"><path d="M6.4 .4 V6.6 H.4 Z" fill="#d9d9d9"/><g fill="#8c8c8c"><rect x="5.7" y="0" width="1.3" height="1.3"/><rect x="5.7" y="5.7" width="1.3" height="1.3"/><rect x="0" y="5.7" width="1.3" height="1.3"/></g><g fill="#b5b5b5"><rect x="5.7" y="2.8" width="1.2" height="1.2"/><rect x="2.9" y="2.9" width="1.2" height="1.2"/><rect x="2.9" y="5.7" width="1.2" height="1.2"/></g></svg>
<svg style="position:absolute;left:0.00px;top:0.00px;pointer-events:none" width="1503.00" height="846.00" viewBox="0 0 1503 846"><path d="M274.96 305.0H280.91M282.96 305.0H288.91M290.96 305.0H296.91M298.96 305.0H304.91M306.96 305.0H312.91M314.96 305.0H320.91M322.96 305.0H328.91M330.96 305.0H336.91M338.96 305.0H344.91M346.96 305.0H352.91M354.96 305.0H360.91M362.96 305.0H368.91M370.96 305.0H376.91M378.96 305.0H384.91M386.96 305.0H392.91M394.96 305.0H400.91M402.96 305.0H408.91M410.96 305.0H416.91M418.96 305.0H424.91M426.96 305.0H432.91M434.96 305.0H440.91M442.96 305.0H448.91M450.96 305.0H456.91M458.96 305.0H464.91M466.96 305.0H472.91M474.96 305.0H480.91M482.96 305.0H488.91M490.96 305.0H496.91M498.96 305.0H504.91M506.96 305.0H512.91M514.96 305.0H520.91M522.96 305.0H528.91M530.96 305.0H536.91M538.96 305.0H544.91M546.96 305.0H552.91M554.96 305.0H560.91M562.96 305.0H568.91M570.96 305.0H576.91M578.96 305.0H584.91M586.96 305.0H592.91M594.96 305.0H600.91M602.96 305.0H608.91M610.96 305.0H616.91M618.96 305.0H624.91M626.96 305.0H632.91M634.96 305.0H640.91M642.96 305.0H648.91M650.96 305.0H656.91M658.96 305.0H664.91M666.96 305.0H672.91M674.96 305.0H680.91M682.96 305.0H688.91M690.96 305.0H696.91M698.96 305.0H704.91M706.96 305.0H712.91M714.96 305.0H720.91M722.96 305.0H728.91M730.96 305.0H736.91M738.96 305.0H744.91M746.96 305.0H752.91M754.96 305.0H760.91M762.96 305.0H768.91M770.96 305.0H776.91M778.96 305.0H784.91M786.96 305.0H792.91M794.96 305.0H800.91M802.96 305.0H808.91M810.96 305.0H816.91M818.96 305.0H824.91M826.96 305.0H832.91M834.96 305.0H840.91M842.96 305.0H848.91M850.96 305.0H856.91M858.96 305.0H864.91M866.96 305.0H872.91M874.96 305.0H880.91M882.96 305.0H888.91M890.96 305.0H896.91M898.96 305.0H904.91M906.96 305.0H912.91M914.96 305.0H920.91M922.96 305.0H928.91M930.96 305.0H936.91M938.96 305.0H944.91M946.96 305.0H952.91M954.96 305.0H960.91M962.96 305.0H968.91M970.96 305.0H976.91M978.96 305.0H984.91M986.96 305.0H992.91M994.96 305.0H1000.91M1002.96 305.0H1008.91M1010.96 305.0H1016.91M1018.96 305.0H1024.91M1026.96 305.0H1032.91M1034.96 305.0H1040.91M1042.96 305.0H1048.91M1050.96 305.0H1056.91M1058.96 305.0H1064.91M1066.96 305.0H1072.91M1074.96 305.0H1080.91M1082.96 305.0H1088.91M1090.96 305.0H1096.91M1098.96 305.0H1104.91M1106.96 305.0H1112.91M1114.96 305.0H1120.91M1122.96 305.0H1128.91M1130.96 305.0H1136.91M1138.96 305.0H1144.91M1146.96 305.0H1152.91M1154.96 305.0H1160.91M1162.96 305.0H1168.91M1170.96 305.0H1176.91M1178.96 305.0H1184.91M1186.96 305.0H1192.91M1194.96 305.0H1200.91M1202.96 305.0H1208.91M1210.96 305.0H1216.91M1218.96 305.0H1224.91M1226.96 305.0H1232.91M1234.96 305.0H1240.91M1242.96 305.0H1248.91M1250.96 305.0H1256.91M1258.96 305.0H1264.91M1266.96 305.0H1272.91M1274.96 305.0H1280.91M1282.96 305.0H1288.91M1290.96 305.0H1296.91M1298.96 305.0H1304.91M1306.96 305.0H1312.91M1314.96 305.0H1320.91M1322.96 305.0H1328.91M1328.90 305.0H1330.10M274.96 330.0H280.01M282.06 330.0H288.01M290.06 330.0H296.01M298.06 330.0H304.01M306.06 330.0H312.01M314.06 330.0H320.01M322.06 330.0H328.01M330.06 330.0H336.01M338.06 330.0H344.01M346.06 330.0H352.01M354.06 330.0H360.01M362.06 330.0H368.01M370.06 330.0H376.01M378.06 330.0H384.01M386.06 330.0H392.01M394.06 330.0H400.01M402.06 330.0H408.01M410.06 330.0H416.01M418.06 330.0H424.01M426.06 330.0H432.01M434.06 330.0H440.01M442.06 330.0H448.01M450.06 330.0H456.01M458.06 330.0H464.01M466.06 330.0H472.01M474.06 330.0H480.01M482.06 330.0H488.01M490.06 330.0H496.01M498.06 330.0H504.01M506.06 330.0H512.01M514.06 330.0H520.01M522.06 330.0H528.01M530.06 330.0H536.01M538.06 330.0H544.01M546.06 330.0H552.01M554.06 330.0H560.01M562.06 330.0H568.01M570.06 330.0H576.01M578.06 330.0H584.01M586.06 330.0H592.01M594.06 330.0H600.01M602.06 330.0H608.01M610.06 330.0H616.01M618.06 330.0H624.01M626.06 330.0H632.01M634.06 330.0H640.01M642.06 330.0H648.01M650.06 330.0H656.01M658.06 330.0H664.01M666.06 330.0H672.01M674.06 330.0H680.01M682.06 330.0H688.01M690.06 330.0H696.01M698.06 330.0H704.01M706.06 330.0H712.01M714.06 330.0H720.01M722.06 330.0H728.01M730.06 330.0H736.01M738.06 330.0H744.01M746.06 330.0H752.01M754.06 330.0H760.01M762.06 330.0H768.01M770.06 330.0H776.01M778.06 330.0H784.01M786.06 330.0H792.01M794.06 330.0H800.01M802.06 330.0H808.01M810.06 330.0H816.01M818.06 330.0H824.01M826.06 330.0H832.01M834.06 330.0H840.01M842.06 330.0H848.01M850.06 330.0H856.01M858.06 330.0H864.01M866.06 330.0H872.01M874.06 330.0H880.01M882.06 330.0H888.01M890.06 330.0H896.01M898.06 330.0H904.01M906.06 330.0H912.01M914.06 330.0H920.01M922.06 330.0H928.01M930.06 330.0H936.01M938.06 330.0H944.01M946.06 330.0H952.01M954.06 330.0H960.01M962.06 330.0H968.01M970.06 330.0H976.01M978.06 330.0H984.01M986.06 330.0H992.01M994.06 330.0H1000.01M1002.06 330.0H1008.01M1010.06 330.0H1016.01M1018.06 330.0H1024.01M1026.06 330.0H1032.01M1034.06 330.0H1040.01M1042.06 330.0H1048.01M1050.06 330.0H1056.01M1058.06 330.0H1064.01M1066.06 330.0H1072.01M1074.06 330.0H1080.01M1082.06 330.0H1088.01M1090.06 330.0H1096.01M1098.06 330.0H1104.01M1106.06 330.0H1112.01M1114.06 330.0H1120.01M1122.06 330.0H1128.01M1130.06 330.0H1136.01M1138.06 330.0H1144.01M1146.06 330.0H1152.01M1154.06 330.0H1160.01M1162.06 330.0H1168.01M1170.06 330.0H1176.01M1178.06 330.0H1184.01M1186.06 330.0H1192.01M1194.06 330.0H1200.01M1202.06 330.0H1208.01M1210.06 330.0H1216.01M1218.06 330.0H1224.01M1226.06 330.0H1232.01M1234.06 330.0H1240.01M1242.06 330.0H1248.01M1250.06 330.0H1256.01M1258.06 330.0H1264.01M1266.06 330.0H1272.01M1274.06 330.0H1280.01M1282.06 330.0H1288.01M1290.06 330.0H1296.01M1298.06 330.0H1304.01M1306.06 330.0H1312.01M1314.06 330.0H1320.01M1322.06 330.0H1328.01M1329.1 307.00V312.90M1329.1 315.00V320.90M1329.1 323.00V328.90M276.0 304.00V305.85M276.0 307.90V313.85M276.0 315.90V321.85M276.0 323.90V329.85" fill="none" stroke="#ff0000" stroke-width="2.05"/></svg>
<svg style="position:absolute;left:0.00px;top:0.00px;" width="1503.00" height="846.00" viewBox="0 0 1503 846"><rect x="420.8" y="330.9" width="519.9" height="118.4" fill="#6e97c9" stroke="#0c1420" stroke-width="1.2"/><circle cx="413.7" cy="328.6" r="23.9" fill="#799fd0" stroke="#0c1420" stroke-width="1.1"/></svg>
<span class="p dv" style="top:354px;font-size:21px;line-height:25px;left:435.70px;color:#000;letter-spacing:0px">You will see the multi currency mark in</span>
<span class="p dv" style="top:379px;font-size:21px;line-height:25px;left:435.70px;color:#000;letter-spacing:-0.05px">Operation list if the main currency used is</span>
<span class="p dv" style="top:404px;font-size:21px;line-height:25px;left:435.70px;color:#000;letter-spacing:0.01px">different from default main currency.</span>
<span class="p dv w" style="top:316px;font-size:20.4px;line-height:25px;left:412.40px;transform:translateX(-50%);">11</span>
</div>
</body></html>
